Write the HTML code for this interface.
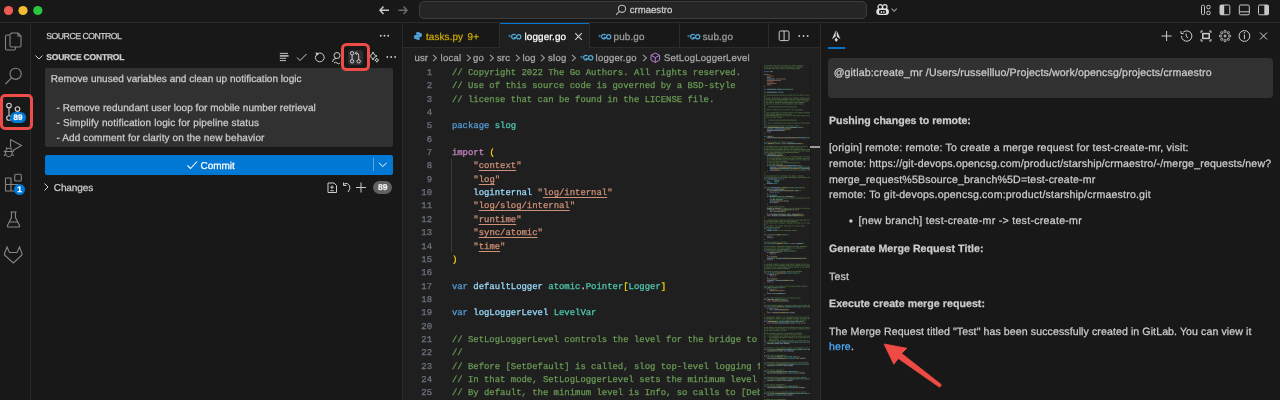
<!DOCTYPE html>
<html><head><meta charset="utf-8"><style>
html,body{margin:0;padding:0;width:1280px;height:400px;overflow:hidden;background:#181818;}
body{position:relative;font-family:'Liberation Sans', sans-serif;}
div{-webkit-text-stroke:0.25px currentColor;text-rendering:geometricPrecision;}
#root{position:absolute;left:0;top:0;width:1280px;height:400px;overflow:hidden;background:#181818;will-change:transform;}
</style></head><body><div id="root">
<div style="position:absolute;left:0px;top:0px;width:1280px;height:22px;background:#181818;"></div><div style="position:absolute;left:0px;top:22px;width:1280px;height:1px;background:#2b2b2b;"></div><svg style="position:absolute;left:0px;top:0px;" width="50" height="22" viewBox="0 0 50 22"><circle cx="8.5" cy="10.5" r="4.6" fill="#ee5b52"/><circle cx="23" cy="10.5" r="4.6" fill="#f4bd30"/><circle cx="37.8" cy="10.5" r="4.6" fill="#2ac63f"/></svg><svg style="position:absolute;left:376px;top:3px;" width="36" height="16" viewBox="0 0 36 16"><path d="M7.5 3.5 L4 7.3 L7.5 11.1 M4 7.3 H13" stroke="#c8c8c8" stroke-width="1.5" fill="none"/><path d="M27.5 3.5 L31 7.3 L27.5 11.1 M22.5 7.3 H31" stroke="#6a6a6a" stroke-width="1.5" fill="none"/></svg><div style="position:absolute;left:419px;top:1px;width:448px;height:18px;background:#252525;box-sizing:border-box;border:1.2px solid #3e3e3e;border-radius:5px;"></div><svg style="position:absolute;left:614px;top:3px;" width="14" height="14" viewBox="0 0 14 14"><circle cx="8" cy="5.8" r="3.6" stroke="#b8b8b8" stroke-width="1.1" fill="none"/><path d="M5.4 8.4 L2 11.8" stroke="#b8b8b8" stroke-width="1.1"/></svg><div style="position:absolute;left:629.7px;top:4.35px;height:13.44px;line-height:13.44px;font-size:9.6px;font-family:'Liberation Sans', sans-serif;font-weight:400;color:#cccccc;white-space:pre;">crmaestro</div><svg style="position:absolute;left:874px;top:2px;" width="26" height="16" viewBox="0 0 26 16"><rect x="2.3" y="6.6" width="12.6" height="6.4" rx="3.2" fill="#e2e2e2"/><rect x="5.1" y="8.1" width="7" height="3.7" rx="1.3" fill="#181818"/><ellipse cx="7.4" cy="9.9" rx="0.75" ry="1" fill="#e2e2e2"/><ellipse cx="9.9" cy="9.9" rx="0.75" ry="1" fill="#e2e2e2"/><circle cx="6.2" cy="4.9" r="2.25" stroke="#e2e2e2" stroke-width="1.2" fill="#181818"/><circle cx="10.8" cy="4.9" r="2.25" stroke="#e2e2e2" stroke-width="1.2" fill="#181818"/><path d="M17.6 6.6 L20.2 9.3 L22.8 6.6" stroke="#a0a0a0" stroke-width="1.1" fill="none"/></svg><svg style="position:absolute;left:1198px;top:2px;" width="78" height="18" viewBox="0 0 78 18">
<rect x="3.5" y="3.2" width="3" height="9.4" rx="1.2" stroke="#c8c8c8" stroke-width="1" fill="none"/>
<rect x="8.8" y="3.4" width="3.4" height="3.4" rx="1.3" stroke="#c8c8c8" stroke-width="1" fill="none"/>
<rect x="8.8" y="9.2" width="3.4" height="3.4" rx="1.3" stroke="#c8c8c8" stroke-width="1" fill="none"/>
<rect x="22" y="3" width="9.8" height="9.8" rx="1.3" stroke="#c8c8c8" stroke-width="1" fill="none"/>
<rect x="22" y="3" width="4.2" height="9.8" fill="#c8c8c8"/>
<rect x="41.3" y="3" width="10" height="9.8" rx="1.3" stroke="#c8c8c8" stroke-width="1" fill="none"/>
<path d="M41.3 9.8 H51.3" stroke="#c8c8c8" stroke-width="1"/>
<rect x="60.5" y="3" width="10" height="9.8" rx="1.3" stroke="#c8c8c8" stroke-width="1" fill="none"/>
<rect x="66.3" y="3" width="4.2" height="9.8" fill="#c8c8c8"/>
</svg><div style="position:absolute;left:0px;top:23px;width:30px;height:377px;background:#181818;"></div><div style="position:absolute;left:30px;top:23px;width:1px;height:377px;background:#2b2b2b;"></div><svg style="position:absolute;left:0px;top:24px;" width="30" height="260" viewBox="0 0 30 260">
<g stroke="#858585" stroke-width="1.1" fill="none">
<path d="M9.8 11 H7 Q5.5 11 5.5 12.5 V24.5 Q5.5 26 7 26 H14 Q15.5 26 15.5 24.5 V23"/>
<path d="M11.5 9.5 Q10 9.5 10 11 V21.5 Q10 23 11.5 23 H19.5 Q21 23 21 21.5 V12 L18 9 H11.5Z"/>
<path d="M18 9 V12 H21"/>
<circle cx="15.6" cy="49.8" r="5.6"/>
<path d="M11.6 53.8 L5.5 60"/>
</g>
</svg><svg style="position:absolute;left:0px;top:95px;" width="30" height="34" viewBox="0 0 30 34">
<g stroke="#cfcfcf" stroke-width="1.1" fill="none">
<circle cx="9" cy="10.5" r="2.3"/>
<circle cx="17.5" cy="14" r="2.3"/>
<circle cx="9" cy="23" r="2.3"/>
<path d="M9 12.8 V20.7"/>
<path d="M17.5 16.3 Q17.5 20 11.3 22"/>
</g>
</svg><div style="position:absolute;left:10px;top:112px;width:16px;height:11px;border-radius:6px;background:#0078d4;color:#fff;font-family:&quot;Liberation Sans&quot;,sans-serif;font-weight:700;font-size:8px;line-height:11px;text-align:center;">89</div><svg style="position:absolute;left:0px;top:135px;" width="30" height="140" viewBox="0 0 30 140">
<g stroke="#858585" stroke-width="1.1" fill="none">
<path d="M10.5 4.5 L21.5 10.5 L13 15.5"/>
<path d="M10.5 4.5 V12"/>
<ellipse cx="8.8" cy="17.5" rx="3.3" ry="4.2"/>
<path d="M5.5 16.5 H12 M5.5 17.2 L3.8 16 M12.2 17.2 L13.8 16 M5.5 19.5 L3.8 20.8 M12.2 19.5 L13.8 20.8 M7 13.5 L6 12.5 M10.6 13.5 L11.6 12.5"/>
<path d="M5.5 43 H11 V49.5 H17.5 V56 H5.5 Z M5.5 49.5 H11 V56" stroke-linejoin="round"/>
<rect x="14.7" y="39.2" width="6.6" height="6.8" rx="1.3"/>
<path d="M11.5 77 V82.5 L7.5 90.5 Q7 92 8.5 92 H18.5 Q20 92 19.5 90.5 L15.5 82.5 V77 M10.5 77 H16.5 M9.3 87 H17.8"/>
<path d="M4.5 118.5 L7 112 L9.5 117.5 H17 L19.5 112 L22 118.5 L22 120 L13.3 128 L4.5 120 Z"/>
</g>
</svg><div style="position:absolute;left:14px;top:183.5px;width:11px;height:11px;border-radius:6px;background:#0078d4;color:#fff;font-family:&quot;Liberation Sans&quot;,sans-serif;font-weight:700;font-size:8px;line-height:11px;text-align:center;">1</div><div style="position:absolute;left:31px;top:23px;width:371px;height:377px;background:#181818;"></div><div style="position:absolute;left:402px;top:23px;width:1px;height:377px;background:#2b2b2b;"></div><div style="position:absolute;left:46.3px;top:30.09px;height:12.18px;line-height:12.18px;font-size:8.7px;font-family:'Liberation Sans', sans-serif;font-weight:400;color:#cccccc;white-space:pre;letter-spacing:-0.5px;">SOURCE CONTROL</div><svg style="position:absolute;left:376px;top:29px;" width="20" height="12" viewBox="0 0 20 12"><circle cx="4.8" cy="6.8" r="0.95" fill="#cccccc"/><circle cx="8.5" cy="6.8" r="0.95" fill="#cccccc"/><circle cx="12.2" cy="6.8" r="0.95" fill="#cccccc"/></svg><svg style="position:absolute;left:33px;top:51px;" width="12" height="12" viewBox="0 0 12 12"><path d="M2.5 4.5 L6 8 L9.5 4.5" stroke="#cccccc" stroke-width="1" fill="none"/></svg><div style="position:absolute;left:46.3px;top:51.60px;height:11.9px;line-height:11.9px;font-size:8.5px;font-family:'Liberation Sans', sans-serif;font-weight:700;color:#cccccc;white-space:pre;letter-spacing:-0.2px;">SOURCE CONTROL</div><svg style="position:absolute;left:276px;top:46px;" width="124" height="22" viewBox="0 0 124 22">
<g stroke="#cccccc" stroke-width="1" fill="none">
<path d="M3.8 7.4 H12 M3.8 12.3 H10.2 M3.8 14.6 H10" stroke-width="0.95"/><path d="M3.8 9.9 H12.6" stroke-width="1.5"/>
<path d="M21 11.5 L24 14.5 L30.5 8"/>
<path d="M41.6 7.6 A4.4 4.4 0 1 1 39.8 9.6"/><path d="M39.6 6.2 L43.2 7.6 L40.4 10.2 Z" fill="#cccccc" stroke="none"/>
<circle cx="61" cy="9.5" r="3"/>
<path d="M56.5 16 Q56.5 12.5 60 12.5 M58 17 Q59.5 15.5 61 17 Q62.5 18.5 64 17"/>
</g>
</svg><div style="position:absolute;left:348px;top:49.5px;width:15px;height:15px;background:#2e2e2e;border-radius:3px;"></div><svg style="position:absolute;left:346px;top:48px;" width="20" height="18" viewBox="0 0 20 18">
<g stroke="#d0d0d0" stroke-width="1" fill="none">
<circle cx="6.1" cy="5.3" r="1.7"/><circle cx="6.1" cy="13.3" r="1.7"/><circle cx="12.7" cy="13.3" r="1.7"/>
<path d="M6.1 7 V11.6"/>
<path d="M12.7 11.6 V7.3 Q12.7 5.2 10.6 5.2 H9.4 M10.9 3.6 L9.3 5.2 L10.9 6.8"/>
</g>
</svg><svg style="position:absolute;left:366px;top:48px;" width="34" height="18" viewBox="0 0 34 18">
<g stroke="#cccccc" stroke-width="1" fill="none">
<path d="M7 4 Q7.6 7.4 11 8 Q7.6 8.6 7 12 Q6.4 8.6 3 8 Q6.4 7.4 7 4 Z"/>
<path d="M10.8 10.2 Q11.1 11.9 12.8 12.2 Q11.1 12.5 10.8 14.2 Q10.5 12.5 8.8 12.2 Q10.5 11.9 10.8 10.2 Z"/>
</g>
<circle cx="21.3" cy="9" r="0.9" fill="#cccccc"/><circle cx="25.2" cy="9" r="0.9" fill="#cccccc"/><circle cx="29.1" cy="9" r="0.9" fill="#cccccc"/>
</svg><div style="position:absolute;left:45px;top:68px;width:348px;height:79px;background:#313131;border-radius:2px;"></div><div style="position:absolute;left:50.8px;top:72.73px;height:14.0px;line-height:14.0px;font-size:10px;font-family:'Liberation Sans', sans-serif;font-weight:400;color:#cccccc;white-space:pre;letter-spacing:0.02px;">Remove unused variables and clean up notification logic</div><div style="position:absolute;left:50.8px;top:102.23px;height:14.0px;line-height:14.0px;font-size:10px;font-family:'Liberation Sans', sans-serif;font-weight:400;color:#cccccc;white-space:pre;letter-spacing:0.045px;">  - Remove redundant user loop for mobile number retrieval</div><div style="position:absolute;left:50.8px;top:117.13px;height:14.0px;line-height:14.0px;font-size:10px;font-family:'Liberation Sans', sans-serif;font-weight:400;color:#cccccc;white-space:pre;letter-spacing:0.127px;">  - Simplify notification logic for pipeline status</div><div style="position:absolute;left:50.8px;top:131.93px;height:14.0px;line-height:14.0px;font-size:10px;font-family:'Liberation Sans', sans-serif;font-weight:400;color:#cccccc;white-space:pre;letter-spacing:0.1px;">  - Add comment for clarity on the new behavior</div><div style="position:absolute;left:341px;top:43px;width:29px;height:28px;box-sizing:border-box;border:3.7px solid #ee4c48;border-radius:5.5px;"></div><div style="position:absolute;left:45px;top:154.5px;width:347.5px;height:20.3px;background:#0078d4;border-radius:2px;"></div><svg style="position:absolute;left:185px;top:158px;" width="14" height="14" viewBox="0 0 14 14"><path d="M2.5 7.5 L5.5 10.5 L12 3.5" stroke="#ffffff" stroke-width="1.1" fill="none"/></svg><div style="position:absolute;left:200.6px;top:159.73px;height:14.0px;line-height:14.0px;font-size:10px;font-family:'Liberation Sans', sans-serif;font-weight:400;color:#ffffff;white-space:pre;letter-spacing:-0.05px;">Commit</div><div style="position:absolute;left:373.2px;top:158px;width:1px;height:13px;background:rgba(255,255,255,0.35);"></div><svg style="position:absolute;left:376px;top:160px;" width="14" height="10" viewBox="0 0 14 10"><path d="M3 2.8 L6.8 6.6 L10.6 2.8" stroke="#ffffff" stroke-width="1" fill="none"/></svg><svg style="position:absolute;left:40px;top:181px;" width="12" height="12" viewBox="0 0 12 12"><path d="M4.5 2.5 L8 6 L4.5 9.5" stroke="#cccccc" stroke-width="1" fill="none"/></svg><div style="position:absolute;left:53.75px;top:182.33px;height:14.0px;line-height:14.0px;font-size:10px;font-family:'Liberation Sans', sans-serif;font-weight:400;color:#cccccc;white-space:pre;letter-spacing:-0.08px;">Changes</div><svg style="position:absolute;left:324px;top:179px;" width="46" height="16" viewBox="0 0 46 16">
<g stroke="#cccccc" stroke-width="1" fill="none">
<path d="M4 4 H10 L12.5 6.5 V13.5 H4 Z"/>
<path d="M8 6.5 V10 M6.3 8.2 H9.7 M6.3 11.7 H9.7"/>
<path d="M20 5 Q23.5 3 25.5 6.5 Q27 9.5 24 13" />
<path d="M19.5 3.5 V6.5 H22.5"/>
<path d="M37 3.5 V13.5 M32 8.5 H42"/>
</g>
</svg><div style="position:absolute;left:372.8px;top:180.7px;width:19.7px;height:13.5px;border-radius:7px;background:#616161;color:#f0f0f0;font-family:&quot;Liberation Sans&quot;,sans-serif;font-weight:700;font-size:8.5px;line-height:13.5px;text-align:center;">89</div><div style="position:absolute;left:403px;top:23px;width:417px;height:377px;background:#1f1f1f;"></div><div style="position:absolute;left:403px;top:23px;width:417px;height:25px;background:#181818;"></div><div style="position:absolute;left:403px;top:47px;width:417px;height:1px;background:#2b2b2b;"></div><div style="position:absolute;left:500px;top:23px;width:89.4px;height:25px;background:#1f1f1f;"></div><div style="position:absolute;left:500px;top:23px;width:89.4px;height:1px;background:#0078d4;"></div><div style="position:absolute;left:499px;top:23px;width:1px;height:25px;background:#2b2b2b;"></div><div style="position:absolute;left:589.4px;top:23px;width:1px;height:24px;background:#2b2b2b;"></div><div style="position:absolute;left:678.6px;top:23px;width:1px;height:24px;background:#2b2b2b;"></div><div style="position:absolute;left:767.5px;top:23px;width:1px;height:24px;background:#2b2b2b;"></div><svg style="position:absolute;left:412px;top:30px;" width="12" height="12" viewBox="0 0 12 12"><g transform="translate(1.3,1.3) scale(0.78)"><path d="M5.8 1 C3.5 1 3.6 2 3.6 3.2 V4.3 H6 V4.8 H2.6 C1.2 4.8 0.8 5.9 0.8 7.3 C0.8 8.8 1.3 9.8 2.6 9.8 H3.5 V8.4 C3.5 7.4 4.3 6.6 5.3 6.6 H7.6 C8.4 6.6 9 6 9 5.2 V3 C9 1.9 8 1 5.8 1Z" fill="#4f9fd6"/><path d="M6.2 11 C8.5 11 8.4 10 8.4 8.8 V7.7 H6 V7.2 H9.4 C10.8 7.2 11.2 6.1 11.2 4.7 C11.2 3.2 10.7 2.2 9.4 2.2 H8.5 V3.6 C8.5 4.6 7.7 5.4 6.7 5.4 H4.4 C3.6 5.4 3 6 3 6.8 V9 C3 10.1 4 11 6.2 11Z" fill="#4f9fd6"/></g></svg><div style="position:absolute;left:426px;top:30.84px;height:13.86px;line-height:13.86px;font-size:9.9px;font-family:'Liberation Sans', sans-serif;font-weight:400;color:#cca700;white-space:pre;letter-spacing:0.12px;">tasks.py</div><div style="position:absolute;left:467.5px;top:30.84px;height:13.86px;line-height:13.86px;font-size:9.9px;font-family:'Liberation Sans', sans-serif;font-weight:400;color:#cca700;white-space:pre;letter-spacing:0.15px;">9+</div><svg style="position:absolute;left:508.3px;top:32.5px;" width="15" height="8" viewBox="0 0 15 8"><path d="M0.3 2.6 H2.6 M0.8 3.7 H2.6" stroke="#4fa8d8" stroke-width="0.7"/><path d="M7.6 2.2 A2.2 2.3 0 1 0 7.8 4.6 H5.8" stroke="#4fa8d8" stroke-width="1.25" fill="none"/><ellipse cx="10.7" cy="3.7" rx="2.1" ry="2.2" stroke="#4fa8d8" stroke-width="1.25" fill="none"/></svg><div style="position:absolute;left:524.5px;top:30.84px;height:13.86px;line-height:13.86px;font-size:9.9px;font-family:'Liberation Sans', sans-serif;font-weight:400;color:#ffffff;white-space:pre;letter-spacing:0.12px;">logger.go</div><svg style="position:absolute;left:573px;top:31px;" width="11" height="11" viewBox="0 0 11 11"><path d="M2.2 2.2 L8.8 8.8 M8.8 2.2 L2.2 8.8" stroke="#d0d0d0" stroke-width="1.1"/></svg><svg style="position:absolute;left:597.6px;top:32.5px;" width="15" height="8" viewBox="0 0 15 8"><path d="M0.3 2.6 H2.6 M0.8 3.7 H2.6" stroke="#4fa8d8" stroke-width="0.7"/><path d="M7.6 2.2 A2.2 2.3 0 1 0 7.8 4.6 H5.8" stroke="#4fa8d8" stroke-width="1.25" fill="none"/><ellipse cx="10.7" cy="3.7" rx="2.1" ry="2.2" stroke="#4fa8d8" stroke-width="1.25" fill="none"/></svg><div style="position:absolute;left:613.6px;top:30.84px;height:13.86px;line-height:13.86px;font-size:9.9px;font-family:'Liberation Sans', sans-serif;font-weight:400;color:#9d9d9d;white-space:pre;letter-spacing:0.13px;">pub.go</div><svg style="position:absolute;left:687px;top:32.5px;" width="15" height="8" viewBox="0 0 15 8"><path d="M0.3 2.6 H2.6 M0.8 3.7 H2.6" stroke="#4fa8d8" stroke-width="0.7"/><path d="M7.6 2.2 A2.2 2.3 0 1 0 7.8 4.6 H5.8" stroke="#4fa8d8" stroke-width="1.25" fill="none"/><ellipse cx="10.7" cy="3.7" rx="2.1" ry="2.2" stroke="#4fa8d8" stroke-width="1.25" fill="none"/></svg><div style="position:absolute;left:702.7px;top:30.84px;height:13.86px;line-height:13.86px;font-size:9.9px;font-family:'Liberation Sans', sans-serif;font-weight:400;color:#9d9d9d;white-space:pre;letter-spacing:0.13px;">sub.go</div><svg style="position:absolute;left:776px;top:28px;" width="40" height="16" viewBox="0 0 40 16"><rect x="3.2" y="3" width="9.8" height="9.6" rx="1.3" stroke="#cccccc" stroke-width="1" fill="none"/><path d="M8.1 3 V12.6" stroke="#cccccc" stroke-width="1"/><circle cx="23.3" cy="8" r="0.9" fill="#cccccc"/><circle cx="27.5" cy="8" r="0.9" fill="#cccccc"/><circle cx="31.7" cy="8" r="0.9" fill="#cccccc"/></svg><div style="position:absolute;left:414.4px;top:52.46px;height:13.3px;line-height:13.3px;font-size:9.5px;font-family:'Liberation Sans', sans-serif;font-weight:400;color:#a9a9a9;white-space:pre;letter-spacing:0.22px;">usr</div><div style="position:absolute;left:440.6px;top:52.46px;height:13.3px;line-height:13.3px;font-size:9.5px;font-family:'Liberation Sans', sans-serif;font-weight:400;color:#a9a9a9;white-space:pre;letter-spacing:0.22px;">local</div><div style="position:absolute;left:473.1px;top:52.46px;height:13.3px;line-height:13.3px;font-size:9.5px;font-family:'Liberation Sans', sans-serif;font-weight:400;color:#a9a9a9;white-space:pre;letter-spacing:0.22px;">go</div><div style="position:absolute;left:496.9px;top:52.46px;height:13.3px;line-height:13.3px;font-size:9.5px;font-family:'Liberation Sans', sans-serif;font-weight:400;color:#a9a9a9;white-space:pre;letter-spacing:0.22px;">src</div><div style="position:absolute;left:522.5px;top:52.46px;height:13.3px;line-height:13.3px;font-size:9.5px;font-family:'Liberation Sans', sans-serif;font-weight:400;color:#a9a9a9;white-space:pre;letter-spacing:0.22px;">log</div><div style="position:absolute;left:548.1px;top:52.46px;height:13.3px;line-height:13.3px;font-size:9.5px;font-family:'Liberation Sans', sans-serif;font-weight:400;color:#a9a9a9;white-space:pre;letter-spacing:0.22px;">slog</div><svg style="position:absolute;left:432.3px;top:54px;" width="6" height="8" viewBox="0 0 6 8"><path d="M1 0.9 L4.4 4 L1 7.1" stroke="#9a9a9a" stroke-width="1.1" fill="none"/></svg><svg style="position:absolute;left:465.6px;top:54px;" width="6" height="8" viewBox="0 0 6 8"><path d="M1 0.9 L4.4 4 L1 7.1" stroke="#9a9a9a" stroke-width="1.1" fill="none"/></svg><svg style="position:absolute;left:489px;top:54px;" width="6" height="8" viewBox="0 0 6 8"><path d="M1 0.9 L4.4 4 L1 7.1" stroke="#9a9a9a" stroke-width="1.1" fill="none"/></svg><svg style="position:absolute;left:514.6px;top:54px;" width="6" height="8" viewBox="0 0 6 8"><path d="M1 0.9 L4.4 4 L1 7.1" stroke="#9a9a9a" stroke-width="1.1" fill="none"/></svg><svg style="position:absolute;left:540px;top:54px;" width="6" height="8" viewBox="0 0 6 8"><path d="M1 0.9 L4.4 4 L1 7.1" stroke="#9a9a9a" stroke-width="1.1" fill="none"/></svg><svg style="position:absolute;left:571.3px;top:54px;" width="6" height="8" viewBox="0 0 6 8"><path d="M1 0.9 L4.4 4 L1 7.1" stroke="#9a9a9a" stroke-width="1.1" fill="none"/></svg><svg style="position:absolute;left:642px;top:54px;" width="6" height="8" viewBox="0 0 6 8"><path d="M1 0.9 L4.4 4 L1 7.1" stroke="#9a9a9a" stroke-width="1.1" fill="none"/></svg><svg style="position:absolute;left:579.7px;top:54px;" width="15" height="8" viewBox="0 0 15 8"><path d="M0.3 2.6 H2.6 M0.8 3.7 H2.6" stroke="#4fa8d8" stroke-width="0.7"/><path d="M7.6 2.2 A2.2 2.3 0 1 0 7.8 4.6 H5.8" stroke="#4fa8d8" stroke-width="1.25" fill="none"/><ellipse cx="10.7" cy="3.7" rx="2.1" ry="2.2" stroke="#4fa8d8" stroke-width="1.25" fill="none"/></svg><div style="position:absolute;left:595.6px;top:52.46px;height:13.3px;line-height:13.3px;font-size:9.5px;font-family:'Liberation Sans', sans-serif;font-weight:400;color:#a9a9a9;white-space:pre;letter-spacing:0.229px;">logger.go</div><svg style="position:absolute;left:650px;top:51.5px;" width="11" height="11" viewBox="0 0 11 11"><g stroke="#b180d7" stroke-width="1" fill="none"><path d="M5.3 1 L9.6 3.3 V8.1 L5.3 10.4 L1 8.1 V3.3 Z"/><path d="M1 3.3 L5.3 5.6 L9.6 3.3 M5.3 5.6 V10.4"/></g></svg><div style="position:absolute;left:664px;top:52.46px;height:13.3px;line-height:13.3px;font-size:9.5px;font-family:'Liberation Sans', sans-serif;font-weight:400;color:#a9a9a9;white-space:pre;letter-spacing:0.2px;">SetLogLoggerLevel</div><div style="position:absolute;left:400px;top:66.84px;width:32px;height:13.36px;line-height:13.36px;text-align:right;font-family:'Liberation Mono', monospace;font-size:8.94px;color:#6e7681;">1</div><div style="position:absolute;left:400px;top:80.20px;width:32px;height:13.36px;line-height:13.36px;text-align:right;font-family:'Liberation Mono', monospace;font-size:8.94px;color:#6e7681;">2</div><div style="position:absolute;left:400px;top:93.56px;width:32px;height:13.36px;line-height:13.36px;text-align:right;font-family:'Liberation Mono', monospace;font-size:8.94px;color:#6e7681;">3</div><div style="position:absolute;left:400px;top:106.92px;width:32px;height:13.36px;line-height:13.36px;text-align:right;font-family:'Liberation Mono', monospace;font-size:8.94px;color:#6e7681;">4</div><div style="position:absolute;left:400px;top:120.28px;width:32px;height:13.36px;line-height:13.36px;text-align:right;font-family:'Liberation Mono', monospace;font-size:8.94px;color:#6e7681;">5</div><div style="position:absolute;left:400px;top:133.64px;width:32px;height:13.36px;line-height:13.36px;text-align:right;font-family:'Liberation Mono', monospace;font-size:8.94px;color:#6e7681;">6</div><div style="position:absolute;left:400px;top:147.00px;width:32px;height:13.36px;line-height:13.36px;text-align:right;font-family:'Liberation Mono', monospace;font-size:8.94px;color:#6e7681;">7</div><div style="position:absolute;left:400px;top:160.36px;width:32px;height:13.36px;line-height:13.36px;text-align:right;font-family:'Liberation Mono', monospace;font-size:8.94px;color:#6e7681;">8</div><div style="position:absolute;left:400px;top:173.72px;width:32px;height:13.36px;line-height:13.36px;text-align:right;font-family:'Liberation Mono', monospace;font-size:8.94px;color:#6e7681;">9</div><div style="position:absolute;left:400px;top:187.08px;width:32px;height:13.36px;line-height:13.36px;text-align:right;font-family:'Liberation Mono', monospace;font-size:8.94px;color:#6e7681;">10</div><div style="position:absolute;left:400px;top:200.44px;width:32px;height:13.36px;line-height:13.36px;text-align:right;font-family:'Liberation Mono', monospace;font-size:8.94px;color:#6e7681;">11</div><div style="position:absolute;left:400px;top:213.80px;width:32px;height:13.36px;line-height:13.36px;text-align:right;font-family:'Liberation Mono', monospace;font-size:8.94px;color:#6e7681;">12</div><div style="position:absolute;left:400px;top:227.16px;width:32px;height:13.36px;line-height:13.36px;text-align:right;font-family:'Liberation Mono', monospace;font-size:8.94px;color:#6e7681;">13</div><div style="position:absolute;left:400px;top:240.52px;width:32px;height:13.36px;line-height:13.36px;text-align:right;font-family:'Liberation Mono', monospace;font-size:8.94px;color:#6e7681;">14</div><div style="position:absolute;left:400px;top:253.88px;width:32px;height:13.36px;line-height:13.36px;text-align:right;font-family:'Liberation Mono', monospace;font-size:8.94px;color:#6e7681;">15</div><div style="position:absolute;left:400px;top:267.24px;width:32px;height:13.36px;line-height:13.36px;text-align:right;font-family:'Liberation Mono', monospace;font-size:8.94px;color:#6e7681;">16</div><div style="position:absolute;left:400px;top:280.60px;width:32px;height:13.36px;line-height:13.36px;text-align:right;font-family:'Liberation Mono', monospace;font-size:8.94px;color:#6e7681;">17</div><div style="position:absolute;left:400px;top:293.96px;width:32px;height:13.36px;line-height:13.36px;text-align:right;font-family:'Liberation Mono', monospace;font-size:8.94px;color:#6e7681;">18</div><div style="position:absolute;left:400px;top:307.32px;width:32px;height:13.36px;line-height:13.36px;text-align:right;font-family:'Liberation Mono', monospace;font-size:8.94px;color:#6e7681;">19</div><div style="position:absolute;left:400px;top:320.68px;width:32px;height:13.36px;line-height:13.36px;text-align:right;font-family:'Liberation Mono', monospace;font-size:8.94px;color:#6e7681;">20</div><div style="position:absolute;left:400px;top:334.04px;width:32px;height:13.36px;line-height:13.36px;text-align:right;font-family:'Liberation Mono', monospace;font-size:8.94px;color:#6e7681;">21</div><div style="position:absolute;left:400px;top:347.40px;width:32px;height:13.36px;line-height:13.36px;text-align:right;font-family:'Liberation Mono', monospace;font-size:8.94px;color:#6e7681;">22</div><div style="position:absolute;left:400px;top:360.76px;width:32px;height:13.36px;line-height:13.36px;text-align:right;font-family:'Liberation Mono', monospace;font-size:8.94px;color:#6e7681;">23</div><div style="position:absolute;left:400px;top:374.12px;width:32px;height:13.36px;line-height:13.36px;text-align:right;font-family:'Liberation Mono', monospace;font-size:8.94px;color:#6e7681;">24</div><div style="position:absolute;left:400px;top:387.48px;width:32px;height:13.36px;line-height:13.36px;text-align:right;font-family:'Liberation Mono', monospace;font-size:8.94px;color:#6e7681;">25</div><div style="position:absolute;left:451.9px;top:0;width:309.1px;height:400px;overflow:hidden;font-family:'Liberation Mono', monospace;font-size:8.94px;color:#d4d4d4;"><div style="position:absolute;left:0;top:66.84px;height:13.36px;line-height:13.36px;white-space:pre;"><span style="color:#6a9955;">// Copyright 2022 The Go Authors. All rights reserved.</span></div><div style="position:absolute;left:0;top:80.20px;height:13.36px;line-height:13.36px;white-space:pre;"><span style="color:#6a9955;">// Use of this source code is governed by a BSD-style</span></div><div style="position:absolute;left:0;top:93.56px;height:13.36px;line-height:13.36px;white-space:pre;"><span style="color:#6a9955;">// license that can be found in the LICENSE file.</span></div><div style="position:absolute;left:0;top:106.92px;height:13.36px;line-height:13.36px;white-space:pre;"></div><div style="position:absolute;left:0;top:120.28px;height:13.36px;line-height:13.36px;white-space:pre;"><span style="color:#569cd6;">package</span> <span style="color:#4ec9b0;">slog</span></div><div style="position:absolute;left:0;top:133.64px;height:13.36px;line-height:13.36px;white-space:pre;"></div><div style="position:absolute;left:0;top:147.00px;height:13.36px;line-height:13.36px;white-space:pre;"><span style="color:#c586c0;">import</span> <span style="color:#ffd700;">(</span></div><div style="position:absolute;left:0;top:160.36px;height:13.36px;line-height:13.36px;white-space:pre;">    <span style="color:#ce9178;">"</span><span style="color:#ce9178;text-decoration:underline;text-underline-offset:1.5px;text-decoration-thickness:1px;">context</span><span style="color:#ce9178;">"</span></div><div style="position:absolute;left:0;top:173.72px;height:13.36px;line-height:13.36px;white-space:pre;">    <span style="color:#ce9178;">"</span><span style="color:#ce9178;text-decoration:underline;text-underline-offset:1.5px;text-decoration-thickness:1px;">log</span><span style="color:#ce9178;">"</span></div><div style="position:absolute;left:0;top:187.08px;height:13.36px;line-height:13.36px;white-space:pre;">    <span style="color:#9cdcfe;">loginternal</span> <span style="color:#ce9178;">"</span><span style="color:#ce9178;text-decoration:underline;text-underline-offset:1.5px;text-decoration-thickness:1px;">log/internal</span><span style="color:#ce9178;">"</span></div><div style="position:absolute;left:0;top:200.44px;height:13.36px;line-height:13.36px;white-space:pre;">    <span style="color:#ce9178;">"</span><span style="color:#ce9178;text-decoration:underline;text-underline-offset:1.5px;text-decoration-thickness:1px;">log/slog/internal</span><span style="color:#ce9178;">"</span></div><div style="position:absolute;left:0;top:213.80px;height:13.36px;line-height:13.36px;white-space:pre;">    <span style="color:#ce9178;">"</span><span style="color:#ce9178;text-decoration:underline;text-underline-offset:1.5px;text-decoration-thickness:1px;">runtime</span><span style="color:#ce9178;">"</span></div><div style="position:absolute;left:0;top:227.16px;height:13.36px;line-height:13.36px;white-space:pre;">    <span style="color:#ce9178;">"</span><span style="color:#ce9178;text-decoration:underline;text-underline-offset:1.5px;text-decoration-thickness:1px;">sync/atomic</span><span style="color:#ce9178;">"</span></div><div style="position:absolute;left:0;top:240.52px;height:13.36px;line-height:13.36px;white-space:pre;">    <span style="color:#ce9178;">"</span><span style="color:#ce9178;text-decoration:underline;text-underline-offset:1.5px;text-decoration-thickness:1px;">time</span><span style="color:#ce9178;">"</span></div><div style="position:absolute;left:0;top:253.88px;height:13.36px;line-height:13.36px;white-space:pre;"><span style="color:#ffd700;">)</span></div><div style="position:absolute;left:0;top:267.24px;height:13.36px;line-height:13.36px;white-space:pre;"></div><div style="position:absolute;left:0;top:280.60px;height:13.36px;line-height:13.36px;white-space:pre;"><span style="color:#569cd6;">var</span> <span style="color:#9cdcfe;">defaultLogger</span> <span style="color:#4ec9b0;">atomic</span><span style="color:#d4d4d4;">.</span><span style="color:#4ec9b0;">Pointer</span><span style="color:#ffd700;">[</span><span style="color:#4ec9b0;">Logger</span><span style="color:#ffd700;">]</span></div><div style="position:absolute;left:0;top:293.96px;height:13.36px;line-height:13.36px;white-space:pre;"></div><div style="position:absolute;left:0;top:307.32px;height:13.36px;line-height:13.36px;white-space:pre;"><span style="color:#569cd6;">var</span> <span style="color:#9cdcfe;">logLoggerLevel</span> <span style="color:#4ec9b0;">LevelVar</span></div><div style="position:absolute;left:0;top:320.68px;height:13.36px;line-height:13.36px;white-space:pre;"></div><div style="position:absolute;left:0;top:334.04px;height:13.36px;line-height:13.36px;white-space:pre;"><span style="color:#6a9955;">// SetLogLoggerLevel controls the level for the bridge to the [log] package.</span></div><div style="position:absolute;left:0;top:347.40px;height:13.36px;line-height:13.36px;white-space:pre;"><span style="color:#6a9955;">//</span></div><div style="position:absolute;left:0;top:360.76px;height:13.36px;line-height:13.36px;white-space:pre;"><span style="color:#6a9955;">// Before [SetDefault] is called, slog top-level logging functions call the default [log.Logger].</span></div><div style="position:absolute;left:0;top:374.12px;height:13.36px;line-height:13.36px;white-space:pre;"><span style="color:#6a9955;">// In that mode, SetLogLoggerLevel sets the minimum level for those calls.</span></div><div style="position:absolute;left:0;top:387.48px;height:13.36px;line-height:13.36px;white-space:pre;"><span style="color:#6a9955;">// By default, the minimum level is Info, so calls to [Debug]</span></div></div><div style="position:absolute;left:451.2px;top:158.9px;width:1.2px;height:93.4px;background:#3c3c3c;"></div><div style="position:absolute;left:761px;top:48px;width:59px;height:352px;background:#1f1f1f;"></div><div style="position:absolute;left:760.3px;top:65px;width:1.2px;height:335px;background:#171717;"></div><div style="position:absolute;left:810px;top:65px;width:1px;height:335px;background:#1a1a1a;"></div><svg style="position:absolute;left:763.5px;top:0px;" width="47" height="400" viewBox="0 0 47 400"><g opacity="0.5"><rect x="0.00" y="65.30" width="1.46" height="0.91" fill="#6a9955"/><rect x="2.19" y="65.30" width="6.57" height="0.91" fill="#6a9955"/><rect x="9.49" y="65.30" width="2.92" height="0.91" fill="#6a9955"/><rect x="13.14" y="65.30" width="2.19" height="0.91" fill="#6a9955"/><rect x="16.06" y="65.30" width="1.46" height="0.91" fill="#6a9955"/><rect x="18.25" y="65.30" width="5.84" height="0.91" fill="#6a9955"/><rect x="24.82" y="65.30" width="2.19" height="0.91" fill="#6a9955"/><rect x="27.74" y="65.30" width="4.38" height="0.91" fill="#6a9955"/><rect x="32.85" y="65.30" width="6.57" height="0.91" fill="#6a9955"/><rect x="0.00" y="66.77" width="1.46" height="0.91" fill="#6a9955"/><rect x="2.19" y="66.77" width="2.19" height="0.91" fill="#6a9955"/><rect x="5.11" y="66.77" width="1.46" height="0.91" fill="#6a9955"/><rect x="7.30" y="66.77" width="2.92" height="0.91" fill="#6a9955"/><rect x="10.95" y="66.77" width="4.38" height="0.91" fill="#6a9955"/><rect x="16.06" y="66.77" width="2.92" height="0.91" fill="#6a9955"/><rect x="19.71" y="66.77" width="1.46" height="0.91" fill="#6a9955"/><rect x="21.90" y="66.77" width="5.84" height="0.91" fill="#6a9955"/><rect x="28.47" y="66.77" width="1.46" height="0.91" fill="#6a9955"/><rect x="30.66" y="66.77" width="0.73" height="0.91" fill="#6a9955"/><rect x="32.12" y="66.77" width="6.57" height="0.91" fill="#6a9955"/><rect x="0.00" y="68.24" width="1.46" height="0.91" fill="#6a9955"/><rect x="2.19" y="68.24" width="5.11" height="0.91" fill="#6a9955"/><rect x="8.03" y="68.24" width="2.92" height="0.91" fill="#6a9955"/><rect x="11.68" y="68.24" width="2.19" height="0.91" fill="#6a9955"/><rect x="14.60" y="68.24" width="1.46" height="0.91" fill="#6a9955"/><rect x="16.79" y="68.24" width="3.65" height="0.91" fill="#6a9955"/><rect x="21.17" y="68.24" width="1.46" height="0.91" fill="#6a9955"/><rect x="23.36" y="68.24" width="2.19" height="0.91" fill="#6a9955"/><rect x="26.28" y="68.24" width="5.11" height="0.91" fill="#6a9955"/><rect x="32.12" y="68.24" width="3.65" height="0.91" fill="#6a9955"/><rect x="0.00" y="71.18" width="5.11" height="0.91" fill="#569cd6"/><rect x="5.84" y="71.18" width="2.92" height="0.91" fill="#9cdcfe"/><rect x="0.00" y="74.12" width="4.38" height="0.91" fill="#c586c0"/><rect x="5.11" y="74.12" width="0.73" height="0.91" fill="#ffd700"/><rect x="2.92" y="75.59" width="6.57" height="0.91" fill="#ce9178"/><rect x="2.92" y="77.06" width="3.65" height="0.91" fill="#ce9178"/><rect x="2.92" y="78.53" width="8.03" height="0.91" fill="#9cdcfe"/><rect x="11.68" y="78.53" width="10.22" height="0.91" fill="#ce9178"/><rect x="2.92" y="80.00" width="13.87" height="0.91" fill="#ce9178"/><rect x="2.92" y="81.47" width="6.57" height="0.91" fill="#ce9178"/><rect x="2.92" y="82.94" width="9.49" height="0.91" fill="#ce9178"/><rect x="2.92" y="84.41" width="4.38" height="0.91" fill="#ce9178"/><rect x="0.00" y="85.88" width="0.73" height="0.91" fill="#ffd700"/><rect x="0.00" y="88.82" width="2.19" height="0.91" fill="#569cd6"/><rect x="2.92" y="88.82" width="9.49" height="0.91" fill="#9cdcfe"/><rect x="13.14" y="88.82" width="4.38" height="0.91" fill="#9cdcfe"/><rect x="17.52" y="88.82" width="0.73" height="0.91" fill="#d4d4d4"/><rect x="18.25" y="88.82" width="5.11" height="0.91" fill="#4ec9b0"/><rect x="23.36" y="88.82" width="0.73" height="0.91" fill="#ffd700"/><rect x="24.09" y="88.82" width="4.38" height="0.91" fill="#4ec9b0"/><rect x="28.47" y="88.82" width="0.73" height="0.91" fill="#ffd700"/><rect x="0.00" y="91.76" width="2.19" height="0.91" fill="#569cd6"/><rect x="2.92" y="91.76" width="10.22" height="0.91" fill="#9cdcfe"/><rect x="13.87" y="91.76" width="5.84" height="0.91" fill="#4ec9b0"/><rect x="0.00" y="94.70" width="1.46" height="0.91" fill="#6a9955"/><rect x="2.19" y="94.70" width="12.41" height="0.91" fill="#6a9955"/><rect x="15.33" y="94.70" width="5.84" height="0.91" fill="#6a9955"/><rect x="21.90" y="94.70" width="2.19" height="0.91" fill="#6a9955"/><rect x="24.82" y="94.70" width="3.65" height="0.91" fill="#6a9955"/><rect x="29.20" y="94.70" width="2.19" height="0.91" fill="#6a9955"/><rect x="32.12" y="94.70" width="2.19" height="0.91" fill="#6a9955"/><rect x="35.04" y="94.70" width="4.38" height="0.91" fill="#6a9955"/><rect x="40.15" y="94.70" width="1.46" height="0.91" fill="#6a9955"/><rect x="42.34" y="94.70" width="2.19" height="0.91" fill="#6a9955"/><rect x="45.26" y="94.70" width="1.24" height="0.91" fill="#6a9955"/><rect x="0.00" y="96.17" width="1.46" height="0.91" fill="#6a9955"/><rect x="0.00" y="97.64" width="1.46" height="0.91" fill="#6a9955"/><rect x="2.19" y="97.64" width="4.38" height="0.91" fill="#6a9955"/><rect x="7.30" y="97.64" width="8.76" height="0.91" fill="#6a9955"/><rect x="16.79" y="97.64" width="1.46" height="0.91" fill="#6a9955"/><rect x="18.98" y="97.64" width="5.11" height="0.91" fill="#6a9955"/><rect x="24.82" y="97.64" width="2.92" height="0.91" fill="#6a9955"/><rect x="28.47" y="97.64" width="6.57" height="0.91" fill="#6a9955"/><rect x="35.77" y="97.64" width="5.11" height="0.91" fill="#6a9955"/><rect x="41.61" y="97.64" width="4.89" height="0.91" fill="#6a9955"/><rect x="0.00" y="99.11" width="1.46" height="0.91" fill="#6a9955"/><rect x="2.19" y="99.11" width="1.46" height="0.91" fill="#6a9955"/><rect x="4.38" y="99.11" width="2.92" height="0.91" fill="#6a9955"/><rect x="8.03" y="99.11" width="3.65" height="0.91" fill="#6a9955"/><rect x="12.41" y="99.11" width="12.41" height="0.91" fill="#6a9955"/><rect x="25.55" y="99.11" width="2.92" height="0.91" fill="#6a9955"/><rect x="29.20" y="99.11" width="2.19" height="0.91" fill="#6a9955"/><rect x="32.12" y="99.11" width="5.11" height="0.91" fill="#6a9955"/><rect x="37.96" y="99.11" width="3.65" height="0.91" fill="#6a9955"/><rect x="42.34" y="99.11" width="2.19" height="0.91" fill="#6a9955"/><rect x="45.26" y="99.11" width="1.24" height="0.91" fill="#6a9955"/><rect x="0.00" y="100.58" width="1.46" height="0.91" fill="#6a9955"/><rect x="2.19" y="100.58" width="1.46" height="0.91" fill="#6a9955"/><rect x="4.38" y="100.58" width="5.84" height="0.91" fill="#6a9955"/><rect x="10.95" y="100.58" width="2.19" height="0.91" fill="#6a9955"/><rect x="13.87" y="100.58" width="5.11" height="0.91" fill="#6a9955"/><rect x="19.71" y="100.58" width="3.65" height="0.91" fill="#6a9955"/><rect x="24.09" y="100.58" width="1.46" height="0.91" fill="#6a9955"/><rect x="26.28" y="100.58" width="3.65" height="0.91" fill="#6a9955"/><rect x="30.66" y="100.58" width="1.46" height="0.91" fill="#6a9955"/><rect x="32.85" y="100.58" width="3.65" height="0.91" fill="#6a9955"/><rect x="37.23" y="100.58" width="1.46" height="0.91" fill="#6a9955"/><rect x="39.42" y="100.58" width="5.11" height="0.91" fill="#6a9955"/><rect x="0.00" y="102.05" width="1.46" height="0.91" fill="#6a9955"/><rect x="2.19" y="102.05" width="2.19" height="0.91" fill="#6a9955"/><rect x="5.11" y="102.05" width="2.92" height="0.91" fill="#6a9955"/><rect x="8.76" y="102.05" width="1.46" height="0.91" fill="#6a9955"/><rect x="10.95" y="102.05" width="6.57" height="0.91" fill="#6a9955"/><rect x="18.25" y="102.05" width="5.11" height="0.91" fill="#6a9955"/><rect x="24.09" y="102.05" width="3.65" height="0.91" fill="#6a9955"/><rect x="28.47" y="102.05" width="1.46" height="0.91" fill="#6a9955"/><rect x="30.66" y="102.05" width="3.65" height="0.91" fill="#6a9955"/><rect x="35.04" y="102.05" width="5.11" height="0.91" fill="#6a9955"/><rect x="0.00" y="103.52" width="1.46" height="0.91" fill="#6a9955"/><rect x="2.19" y="103.52" width="2.92" height="0.91" fill="#6a9955"/><rect x="5.84" y="103.52" width="2.19" height="0.91" fill="#6a9955"/><rect x="8.76" y="103.52" width="1.46" height="0.91" fill="#6a9955"/><rect x="10.95" y="103.52" width="4.38" height="0.91" fill="#6a9955"/><rect x="16.06" y="103.52" width="1.46" height="0.91" fill="#6a9955"/><rect x="18.25" y="103.52" width="2.19" height="0.91" fill="#6a9955"/><rect x="21.17" y="103.52" width="8.03" height="0.91" fill="#6a9955"/><rect x="29.93" y="103.52" width="3.65" height="0.91" fill="#6a9955"/><rect x="34.31" y="103.52" width="5.11" height="0.91" fill="#6a9955"/><rect x="0.00" y="104.99" width="1.46" height="0.91" fill="#6a9955"/><rect x="0.00" y="106.46" width="1.46" height="0.91" fill="#6a9955"/><rect x="4.38" y="106.46" width="28.47" height="0.91" fill="#6a9955"/><rect x="0.00" y="107.93" width="1.46" height="0.91" fill="#6a9955"/><rect x="0.00" y="109.40" width="1.46" height="0.91" fill="#6a9955"/><rect x="2.19" y="109.40" width="3.65" height="0.91" fill="#6a9955"/><rect x="6.57" y="109.40" width="1.46" height="0.91" fill="#6a9955"/><rect x="8.76" y="109.40" width="5.11" height="0.91" fill="#6a9955"/><rect x="14.60" y="109.40" width="2.92" height="0.91" fill="#6a9955"/><rect x="18.25" y="109.40" width="1.46" height="0.91" fill="#6a9955"/><rect x="20.44" y="109.40" width="4.38" height="0.91" fill="#6a9955"/><rect x="25.55" y="109.40" width="1.46" height="0.91" fill="#6a9955"/><rect x="27.74" y="109.40" width="2.19" height="0.91" fill="#6a9955"/><rect x="30.66" y="109.40" width="8.03" height="0.91" fill="#6a9955"/><rect x="0.00" y="110.87" width="1.46" height="0.91" fill="#6a9955"/><rect x="0.00" y="112.34" width="1.46" height="0.91" fill="#6a9955"/><rect x="2.19" y="112.34" width="3.65" height="0.91" fill="#6a9955"/><rect x="6.57" y="112.34" width="8.76" height="0.91" fill="#6a9955"/><rect x="16.06" y="112.34" width="1.46" height="0.91" fill="#6a9955"/><rect x="18.25" y="112.34" width="5.11" height="0.91" fill="#6a9955"/><rect x="24.09" y="112.34" width="3.65" height="0.91" fill="#6a9955"/><rect x="28.47" y="112.34" width="1.46" height="0.91" fill="#6a9955"/><rect x="30.66" y="112.34" width="2.19" height="0.91" fill="#6a9955"/><rect x="33.58" y="112.34" width="5.11" height="0.91" fill="#6a9955"/><rect x="39.42" y="112.34" width="7.08" height="0.91" fill="#6a9955"/><rect x="0.00" y="113.81" width="1.46" height="0.91" fill="#6a9955"/><rect x="2.19" y="113.81" width="2.92" height="0.91" fill="#6a9955"/><rect x="5.84" y="113.81" width="5.11" height="0.91" fill="#6a9955"/><rect x="11.68" y="113.81" width="5.84" height="0.91" fill="#6a9955"/><rect x="18.25" y="113.81" width="1.46" height="0.91" fill="#6a9955"/><rect x="20.44" y="113.81" width="2.92" height="0.91" fill="#6a9955"/><rect x="24.09" y="113.81" width="3.65" height="0.91" fill="#6a9955"/><rect x="0.00" y="115.28" width="1.46" height="0.91" fill="#6a9955"/><rect x="2.19" y="115.28" width="12.41" height="0.91" fill="#6a9955"/><rect x="15.33" y="115.28" width="2.92" height="0.91" fill="#6a9955"/><rect x="18.98" y="115.28" width="2.19" height="0.91" fill="#6a9955"/><rect x="21.90" y="115.28" width="3.65" height="0.91" fill="#6a9955"/><rect x="26.28" y="115.28" width="1.46" height="0.91" fill="#6a9955"/><rect x="28.47" y="115.28" width="3.65" height="0.91" fill="#6a9955"/><rect x="32.85" y="115.28" width="3.65" height="0.91" fill="#6a9955"/><rect x="37.23" y="115.28" width="3.65" height="0.91" fill="#6a9955"/><rect x="41.61" y="115.28" width="2.19" height="0.91" fill="#6a9955"/><rect x="44.53" y="115.28" width="1.97" height="0.91" fill="#6a9955"/><rect x="0.00" y="116.75" width="1.46" height="0.91" fill="#6a9955"/><rect x="2.19" y="116.75" width="2.92" height="0.91" fill="#6a9955"/><rect x="5.84" y="116.75" width="2.19" height="0.91" fill="#6a9955"/><rect x="8.76" y="116.75" width="3.65" height="0.91" fill="#6a9955"/><rect x="13.14" y="116.75" width="5.11" height="0.91" fill="#6a9955"/><rect x="0.00" y="118.22" width="1.46" height="0.91" fill="#6a9955"/><rect x="0.00" y="119.69" width="1.46" height="0.91" fill="#6a9955"/><rect x="4.38" y="119.69" width="28.47" height="0.91" fill="#6a9955"/><rect x="0.00" y="121.16" width="1.46" height="0.91" fill="#6a9955"/><rect x="0.00" y="122.63" width="1.46" height="0.91" fill="#6a9955"/><rect x="2.19" y="122.63" width="0.73" height="0.91" fill="#6a9955"/><rect x="3.65" y="122.63" width="2.92" height="0.91" fill="#6a9955"/><rect x="7.30" y="122.63" width="1.46" height="0.91" fill="#6a9955"/><rect x="9.49" y="122.63" width="8.76" height="0.91" fill="#6a9955"/><rect x="18.98" y="122.63" width="2.92" height="0.91" fill="#6a9955"/><rect x="22.63" y="122.63" width="4.38" height="0.91" fill="#6a9955"/><rect x="27.74" y="122.63" width="1.46" height="0.91" fill="#6a9955"/><rect x="29.93" y="122.63" width="4.38" height="0.91" fill="#6a9955"/><rect x="35.04" y="122.63" width="1.46" height="0.91" fill="#6a9955"/><rect x="37.23" y="122.63" width="3.65" height="0.91" fill="#6a9955"/><rect x="41.61" y="122.63" width="4.89" height="0.91" fill="#6a9955"/><rect x="0.00" y="124.10" width="1.46" height="0.91" fill="#6a9955"/><rect x="0.00" y="125.57" width="1.46" height="0.91" fill="#6a9955"/><rect x="2.19" y="125.57" width="12.41" height="0.91" fill="#6a9955"/><rect x="15.33" y="125.57" width="5.11" height="0.91" fill="#6a9955"/><rect x="21.17" y="125.57" width="2.19" height="0.91" fill="#6a9955"/><rect x="24.09" y="125.57" width="5.84" height="0.91" fill="#6a9955"/><rect x="30.66" y="125.57" width="4.38" height="0.91" fill="#6a9955"/><rect x="0.00" y="127.04" width="2.92" height="0.91" fill="#569cd6"/><rect x="3.65" y="127.04" width="12.41" height="0.91" fill="#dcdcaa"/><rect x="16.06" y="127.04" width="0.73" height="0.91" fill="#ffd700"/><rect x="16.79" y="127.04" width="3.65" height="0.91" fill="#9cdcfe"/><rect x="21.17" y="127.04" width="3.65" height="0.91" fill="#4ec9b0"/><rect x="24.82" y="127.04" width="0.73" height="0.91" fill="#ffd700"/><rect x="26.28" y="127.04" width="0.73" height="0.91" fill="#ffd700"/><rect x="27.01" y="127.04" width="5.84" height="0.91" fill="#9cdcfe"/><rect x="33.58" y="127.04" width="3.65" height="0.91" fill="#4ec9b0"/><rect x="37.23" y="127.04" width="0.73" height="0.91" fill="#ffd700"/><rect x="38.69" y="127.04" width="0.73" height="0.91" fill="#ffd700"/><rect x="2.92" y="128.51" width="5.84" height="0.91" fill="#9cdcfe"/><rect x="9.49" y="128.51" width="0.73" height="0.91" fill="#d4d4d4"/><rect x="10.95" y="128.51" width="10.22" height="0.91" fill="#9cdcfe"/><rect x="21.17" y="128.51" width="0.73" height="0.91" fill="#d4d4d4"/><rect x="21.90" y="128.51" width="3.65" height="0.91" fill="#dcdcaa"/><rect x="25.55" y="128.51" width="1.46" height="0.91" fill="#ffd700"/><rect x="2.92" y="129.98" width="10.22" height="0.91" fill="#9cdcfe"/><rect x="13.14" y="129.98" width="0.73" height="0.91" fill="#d4d4d4"/><rect x="13.87" y="129.98" width="2.19" height="0.91" fill="#dcdcaa"/><rect x="16.06" y="129.98" width="0.73" height="0.91" fill="#ffd700"/><rect x="16.79" y="129.98" width="3.65" height="0.91" fill="#9cdcfe"/><rect x="20.44" y="129.98" width="0.73" height="0.91" fill="#ffd700"/><rect x="2.92" y="131.45" width="4.38" height="0.91" fill="#c586c0"/><rect x="0.00" y="132.92" width="0.73" height="0.91" fill="#ffd700"/><rect x="0.00" y="135.86" width="2.92" height="0.91" fill="#569cd6"/><rect x="3.65" y="135.86" width="2.92" height="0.91" fill="#dcdcaa"/><rect x="6.57" y="135.86" width="1.46" height="0.91" fill="#ffd700"/><rect x="8.76" y="135.86" width="0.73" height="0.91" fill="#ffd700"/><rect x="2.92" y="137.33" width="9.49" height="0.91" fill="#9cdcfe"/><rect x="12.41" y="137.33" width="0.73" height="0.91" fill="#d4d4d4"/><rect x="13.14" y="137.33" width="3.65" height="0.91" fill="#dcdcaa"/><rect x="16.79" y="137.33" width="0.73" height="0.91" fill="#ffd700"/><rect x="17.52" y="137.33" width="2.19" height="0.91" fill="#dcdcaa"/><rect x="19.71" y="137.33" width="0.73" height="0.91" fill="#ffd700"/><rect x="20.44" y="137.33" width="12.41" height="0.91" fill="#dcdcaa"/><rect x="32.85" y="137.33" width="0.73" height="0.91" fill="#ffd700"/><rect x="33.58" y="137.33" width="8.03" height="0.91" fill="#9cdcfe"/><rect x="41.61" y="137.33" width="0.73" height="0.91" fill="#d4d4d4"/><rect x="42.34" y="137.33" width="4.16" height="0.91" fill="#4ec9b0"/><rect x="0.00" y="138.80" width="0.73" height="0.91" fill="#ffd700"/><rect x="0.00" y="141.74" width="1.46" height="0.91" fill="#6a9955"/><rect x="2.19" y="141.74" width="5.11" height="0.91" fill="#6a9955"/><rect x="8.03" y="141.74" width="5.11" height="0.91" fill="#6a9955"/><rect x="13.87" y="141.74" width="2.19" height="0.91" fill="#6a9955"/><rect x="16.79" y="141.74" width="5.11" height="0.91" fill="#6a9955"/><rect x="22.63" y="141.74" width="6.57" height="0.91" fill="#6a9955"/><rect x="0.00" y="143.21" width="2.92" height="0.91" fill="#569cd6"/><rect x="3.65" y="143.21" width="5.11" height="0.91" fill="#dcdcaa"/><rect x="8.76" y="143.21" width="1.46" height="0.91" fill="#ffd700"/><rect x="10.95" y="143.21" width="0.73" height="0.91" fill="#d4d4d4"/><rect x="11.68" y="143.21" width="4.38" height="0.91" fill="#4ec9b0"/><rect x="16.79" y="143.21" width="0.73" height="0.91" fill="#ffd700"/><rect x="18.25" y="143.21" width="4.38" height="0.91" fill="#c586c0"/><rect x="23.36" y="143.21" width="9.49" height="0.91" fill="#9cdcfe"/><rect x="32.85" y="143.21" width="0.73" height="0.91" fill="#d4d4d4"/><rect x="33.58" y="143.21" width="2.92" height="0.91" fill="#dcdcaa"/><rect x="36.50" y="143.21" width="1.46" height="0.91" fill="#ffd700"/><rect x="38.69" y="143.21" width="0.73" height="0.91" fill="#ffd700"/><rect x="0.00" y="146.15" width="1.46" height="0.91" fill="#6a9955"/><rect x="2.19" y="146.15" width="7.30" height="0.91" fill="#6a9955"/><rect x="10.22" y="146.15" width="3.65" height="0.91" fill="#6a9955"/><rect x="14.60" y="146.15" width="0.73" height="0.91" fill="#6a9955"/><rect x="16.06" y="146.15" width="2.19" height="0.91" fill="#6a9955"/><rect x="18.98" y="146.15" width="5.11" height="0.91" fill="#6a9955"/><rect x="24.82" y="146.15" width="6.57" height="0.91" fill="#6a9955"/><rect x="32.12" y="146.15" width="3.65" height="0.91" fill="#6a9955"/><rect x="36.50" y="146.15" width="1.46" height="0.91" fill="#6a9955"/><rect x="38.69" y="146.15" width="2.92" height="0.91" fill="#6a9955"/><rect x="42.34" y="146.15" width="1.46" height="0.91" fill="#6a9955"/><rect x="0.00" y="147.62" width="1.46" height="0.91" fill="#6a9955"/><rect x="2.19" y="147.62" width="2.19" height="0.91" fill="#6a9955"/><rect x="5.11" y="147.62" width="6.57" height="0.91" fill="#6a9955"/><rect x="12.41" y="147.62" width="6.57" height="0.91" fill="#6a9955"/><rect x="19.71" y="147.62" width="5.11" height="0.91" fill="#6a9955"/><rect x="25.55" y="147.62" width="5.11" height="0.91" fill="#6a9955"/><rect x="31.39" y="147.62" width="2.19" height="0.91" fill="#6a9955"/><rect x="34.31" y="147.62" width="1.46" height="0.91" fill="#6a9955"/><rect x="36.50" y="147.62" width="2.19" height="0.91" fill="#6a9955"/><rect x="0.00" y="149.09" width="1.46" height="0.91" fill="#6a9955"/><rect x="2.19" y="149.09" width="3.65" height="0.91" fill="#6a9955"/><rect x="6.57" y="149.09" width="2.92" height="0.91" fill="#6a9955"/><rect x="10.22" y="149.09" width="3.65" height="0.91" fill="#6a9955"/><rect x="14.60" y="149.09" width="4.38" height="0.91" fill="#6a9955"/><rect x="19.71" y="149.09" width="2.92" height="0.91" fill="#6a9955"/><rect x="23.36" y="149.09" width="2.19" height="0.91" fill="#6a9955"/><rect x="26.28" y="149.09" width="2.19" height="0.91" fill="#6a9955"/><rect x="29.20" y="149.09" width="6.57" height="0.91" fill="#6a9955"/><rect x="36.50" y="149.09" width="5.11" height="0.91" fill="#6a9955"/><rect x="42.34" y="149.09" width="4.16" height="0.91" fill="#6a9955"/><rect x="0.00" y="150.56" width="1.46" height="0.91" fill="#6a9955"/><rect x="2.19" y="150.56" width="2.19" height="0.91" fill="#6a9955"/><rect x="5.11" y="150.56" width="2.92" height="0.91" fill="#6a9955"/><rect x="8.76" y="150.56" width="8.76" height="0.91" fill="#6a9955"/><rect x="18.25" y="150.56" width="3.65" height="0.91" fill="#6a9955"/><rect x="22.63" y="150.56" width="2.92" height="0.91" fill="#6a9955"/><rect x="26.28" y="150.56" width="1.46" height="0.91" fill="#6a9955"/><rect x="28.47" y="150.56" width="4.38" height="0.91" fill="#6a9955"/><rect x="33.58" y="150.56" width="3.65" height="0.91" fill="#6a9955"/><rect x="37.96" y="150.56" width="2.19" height="0.91" fill="#6a9955"/><rect x="40.88" y="150.56" width="5.62" height="0.91" fill="#6a9955"/><rect x="0.00" y="152.03" width="1.46" height="0.91" fill="#6a9955"/><rect x="2.19" y="152.03" width="1.46" height="0.91" fill="#6a9955"/><rect x="4.38" y="152.03" width="0.73" height="0.91" fill="#6a9955"/><rect x="5.84" y="152.03" width="3.65" height="0.91" fill="#6a9955"/><rect x="10.22" y="152.03" width="7.30" height="0.91" fill="#6a9955"/><rect x="18.25" y="152.03" width="1.46" height="0.91" fill="#6a9955"/><rect x="20.44" y="152.03" width="14.60" height="0.91" fill="#6a9955"/><rect x="0.00" y="153.50" width="2.92" height="0.91" fill="#569cd6"/><rect x="3.65" y="153.50" width="7.30" height="0.91" fill="#dcdcaa"/><rect x="10.95" y="153.50" width="0.73" height="0.91" fill="#ffd700"/><rect x="11.68" y="153.50" width="0.73" height="0.91" fill="#9cdcfe"/><rect x="13.14" y="153.50" width="0.73" height="0.91" fill="#d4d4d4"/><rect x="13.87" y="153.50" width="4.38" height="0.91" fill="#4ec9b0"/><rect x="18.25" y="153.50" width="0.73" height="0.91" fill="#ffd700"/><rect x="19.71" y="153.50" width="0.73" height="0.91" fill="#ffd700"/><rect x="2.92" y="154.97" width="9.49" height="0.91" fill="#9cdcfe"/><rect x="12.41" y="154.97" width="0.73" height="0.91" fill="#d4d4d4"/><rect x="13.14" y="154.97" width="3.65" height="0.91" fill="#dcdcaa"/><rect x="16.79" y="154.97" width="0.73" height="0.91" fill="#ffd700"/><rect x="17.52" y="154.97" width="0.73" height="0.91" fill="#9cdcfe"/><rect x="18.25" y="154.97" width="0.73" height="0.91" fill="#ffd700"/><rect x="2.92" y="156.44" width="1.46" height="0.91" fill="#6a9955"/><rect x="5.11" y="156.44" width="1.46" height="0.91" fill="#6a9955"/><rect x="7.30" y="156.44" width="2.19" height="0.91" fill="#6a9955"/><rect x="10.22" y="156.44" width="6.57" height="0.91" fill="#6a9955"/><rect x="17.52" y="156.44" width="5.11" height="0.91" fill="#6a9955"/><rect x="23.36" y="156.44" width="1.46" height="0.91" fill="#6a9955"/><rect x="25.55" y="156.44" width="0.73" height="0.91" fill="#6a9955"/><rect x="27.01" y="156.44" width="10.95" height="0.91" fill="#6a9955"/><rect x="38.69" y="156.44" width="2.92" height="0.91" fill="#6a9955"/><rect x="42.34" y="156.44" width="3.65" height="0.91" fill="#6a9955"/><rect x="2.92" y="157.91" width="1.46" height="0.91" fill="#6a9955"/><rect x="5.11" y="157.91" width="1.46" height="0.91" fill="#6a9955"/><rect x="7.30" y="157.91" width="3.65" height="0.91" fill="#6a9955"/><rect x="11.68" y="157.91" width="5.84" height="0.91" fill="#6a9955"/><rect x="18.25" y="157.91" width="1.46" height="0.91" fill="#6a9955"/><rect x="20.44" y="157.91" width="2.92" height="0.91" fill="#6a9955"/><rect x="24.09" y="157.91" width="2.92" height="0.91" fill="#6a9955"/><rect x="27.74" y="157.91" width="2.19" height="0.91" fill="#6a9955"/><rect x="30.66" y="157.91" width="1.46" height="0.91" fill="#6a9955"/><rect x="32.85" y="157.91" width="5.11" height="0.91" fill="#6a9955"/><rect x="38.69" y="157.91" width="2.19" height="0.91" fill="#6a9955"/><rect x="41.61" y="157.91" width="2.19" height="0.91" fill="#6a9955"/><rect x="44.53" y="157.91" width="1.97" height="0.91" fill="#6a9955"/><rect x="2.92" y="159.38" width="1.46" height="0.91" fill="#6a9955"/><rect x="5.11" y="159.38" width="2.19" height="0.91" fill="#6a9955"/><rect x="8.03" y="159.38" width="10.22" height="0.91" fill="#6a9955"/><rect x="18.98" y="159.38" width="2.92" height="0.91" fill="#6a9955"/><rect x="22.63" y="159.38" width="2.19" height="0.91" fill="#6a9955"/><rect x="25.55" y="159.38" width="5.84" height="0.91" fill="#6a9955"/><rect x="32.12" y="159.38" width="2.19" height="0.91" fill="#6a9955"/><rect x="35.04" y="159.38" width="2.19" height="0.91" fill="#6a9955"/><rect x="37.96" y="159.38" width="5.11" height="0.91" fill="#6a9955"/><rect x="43.80" y="159.38" width="2.70" height="0.91" fill="#6a9955"/><rect x="2.92" y="160.85" width="1.46" height="0.91" fill="#6a9955"/><rect x="5.11" y="160.85" width="2.19" height="0.91" fill="#6a9955"/><rect x="8.03" y="160.85" width="2.19" height="0.91" fill="#6a9955"/><rect x="10.95" y="160.85" width="3.65" height="0.91" fill="#6a9955"/><rect x="15.33" y="160.85" width="1.46" height="0.91" fill="#6a9955"/><rect x="17.52" y="160.85" width="5.84" height="0.91" fill="#6a9955"/><rect x="2.92" y="162.32" width="1.46" height="0.91" fill="#6a9955"/><rect x="5.11" y="162.32" width="2.92" height="0.91" fill="#6a9955"/><rect x="8.76" y="162.32" width="2.19" height="0.91" fill="#6a9955"/><rect x="11.68" y="162.32" width="3.65" height="0.91" fill="#6a9955"/><rect x="16.06" y="162.32" width="2.92" height="0.91" fill="#6a9955"/><rect x="19.71" y="162.32" width="16.06" height="0.91" fill="#6a9955"/><rect x="2.92" y="163.79" width="1.46" height="0.91" fill="#6a9955"/><rect x="5.11" y="163.79" width="2.19" height="0.91" fill="#6a9955"/><rect x="8.03" y="163.79" width="10.95" height="0.91" fill="#6a9955"/><rect x="2.92" y="165.26" width="1.46" height="0.91" fill="#c586c0"/><rect x="5.11" y="165.26" width="0.73" height="0.91" fill="#9cdcfe"/><rect x="5.84" y="165.26" width="0.73" height="0.91" fill="#d4d4d4"/><rect x="7.30" y="165.26" width="1.46" height="0.91" fill="#9cdcfe"/><rect x="9.49" y="165.26" width="1.46" height="0.91" fill="#d4d4d4"/><rect x="11.68" y="165.26" width="0.73" height="0.91" fill="#9cdcfe"/><rect x="12.41" y="165.26" width="0.73" height="0.91" fill="#d4d4d4"/><rect x="13.14" y="165.26" width="5.11" height="0.91" fill="#dcdcaa"/><rect x="18.25" y="165.26" width="1.46" height="0.91" fill="#ffd700"/><rect x="19.71" y="165.26" width="0.73" height="0.91" fill="#d4d4d4"/><rect x="20.44" y="165.26" width="0.73" height="0.91" fill="#ffd700"/><rect x="21.17" y="165.26" width="0.73" height="0.91" fill="#d4d4d4"/><rect x="21.90" y="165.26" width="10.22" height="0.91" fill="#9cdcfe"/><rect x="32.12" y="165.26" width="0.73" height="0.91" fill="#ffd700"/><rect x="32.85" y="165.26" width="0.73" height="0.91" fill="#d4d4d4"/><rect x="34.31" y="165.26" width="0.73" height="0.91" fill="#d4d4d4"/><rect x="35.04" y="165.26" width="1.46" height="0.91" fill="#9cdcfe"/><rect x="37.23" y="165.26" width="0.73" height="0.91" fill="#ffd700"/><rect x="5.84" y="166.73" width="6.57" height="0.91" fill="#9cdcfe"/><rect x="13.14" y="166.73" width="1.46" height="0.91" fill="#d4d4d4"/><rect x="15.33" y="166.73" width="2.19" height="0.91" fill="#9cdcfe"/><rect x="17.52" y="166.73" width="0.73" height="0.91" fill="#d4d4d4"/><rect x="18.25" y="166.73" width="3.65" height="0.91" fill="#dcdcaa"/><rect x="21.90" y="166.73" width="1.46" height="0.91" fill="#ffd700"/><rect x="23.36" y="166.73" width="0.73" height="0.91" fill="#d4d4d4"/><rect x="24.09" y="166.73" width="0.73" height="0.91" fill="#ffd700"/><rect x="24.82" y="166.73" width="2.19" height="0.91" fill="#9cdcfe"/><rect x="27.01" y="166.73" width="0.73" height="0.91" fill="#d4d4d4"/><rect x="27.74" y="166.73" width="7.30" height="0.91" fill="#4ec9b0"/><rect x="35.04" y="166.73" width="0.73" height="0.91" fill="#d4d4d4"/><rect x="35.77" y="166.73" width="2.19" height="0.91" fill="#9cdcfe"/><rect x="37.96" y="166.73" width="0.73" height="0.91" fill="#d4d4d4"/><rect x="38.69" y="166.73" width="6.57" height="0.91" fill="#4ec9b0"/><rect x="45.26" y="166.73" width="0.73" height="0.91" fill="#ffd700"/><rect x="5.84" y="168.20" width="2.19" height="0.91" fill="#9cdcfe"/><rect x="8.03" y="168.20" width="0.73" height="0.91" fill="#d4d4d4"/><rect x="8.76" y="168.20" width="6.57" height="0.91" fill="#dcdcaa"/><rect x="15.33" y="168.20" width="0.73" height="0.91" fill="#ffd700"/><rect x="16.06" y="168.20" width="0.73" height="0.91" fill="#d4d4d4"/><rect x="16.79" y="168.20" width="9.49" height="0.91" fill="#9cdcfe"/><rect x="26.28" y="168.20" width="0.73" height="0.91" fill="#ffd700"/><rect x="27.01" y="168.20" width="0.73" height="0.91" fill="#9cdcfe"/><rect x="27.74" y="168.20" width="0.73" height="0.91" fill="#d4d4d4"/><rect x="28.47" y="168.20" width="5.11" height="0.91" fill="#dcdcaa"/><rect x="33.58" y="168.20" width="1.46" height="0.91" fill="#ffd700"/><rect x="35.04" y="168.20" width="0.73" height="0.91" fill="#d4d4d4"/><rect x="36.50" y="168.20" width="0.73" height="0.91" fill="#d4d4d4"/><rect x="37.23" y="168.20" width="9.27" height="0.91" fill="#9cdcfe"/><rect x="5.84" y="169.67" width="2.19" height="0.91" fill="#9cdcfe"/><rect x="8.03" y="169.67" width="0.73" height="0.91" fill="#d4d4d4"/><rect x="8.76" y="169.67" width="5.84" height="0.91" fill="#dcdcaa"/><rect x="14.60" y="169.67" width="0.73" height="0.91" fill="#ffd700"/><rect x="15.33" y="169.67" width="0.73" height="0.91" fill="#b5cea8"/><rect x="16.06" y="169.67" width="0.73" height="0.91" fill="#ffd700"/><rect x="17.52" y="169.67" width="1.46" height="0.91" fill="#6a9955"/><rect x="19.71" y="169.67" width="1.46" height="0.91" fill="#6a9955"/><rect x="21.90" y="169.67" width="2.92" height="0.91" fill="#6a9955"/><rect x="25.55" y="169.67" width="2.92" height="0.91" fill="#6a9955"/><rect x="29.20" y="169.67" width="2.19" height="0.91" fill="#6a9955"/><rect x="32.12" y="169.67" width="2.19" height="0.91" fill="#6a9955"/><rect x="35.04" y="169.67" width="5.84" height="0.91" fill="#6a9955"/><rect x="41.61" y="169.67" width="1.46" height="0.91" fill="#6a9955"/><rect x="43.80" y="169.67" width="2.70" height="0.91" fill="#6a9955"/><rect x="2.92" y="171.14" width="0.73" height="0.91" fill="#ffd700"/><rect x="0.00" y="172.61" width="0.73" height="0.91" fill="#ffd700"/><rect x="0.00" y="175.55" width="1.46" height="0.91" fill="#6a9955"/><rect x="2.19" y="175.55" width="9.49" height="0.91" fill="#6a9955"/><rect x="12.41" y="175.55" width="1.46" height="0.91" fill="#6a9955"/><rect x="14.60" y="175.55" width="1.46" height="0.91" fill="#6a9955"/><rect x="16.79" y="175.55" width="6.57" height="0.91" fill="#6a9955"/><rect x="24.09" y="175.55" width="2.92" height="0.91" fill="#6a9955"/><rect x="27.74" y="175.55" width="3.65" height="0.91" fill="#6a9955"/><rect x="32.12" y="175.55" width="0.73" height="0.91" fill="#6a9955"/><rect x="33.58" y="175.55" width="5.84" height="0.91" fill="#6a9955"/><rect x="0.00" y="177.02" width="1.46" height="0.91" fill="#6a9955"/><rect x="2.19" y="177.02" width="1.46" height="0.91" fill="#6a9955"/><rect x="4.38" y="177.02" width="1.46" height="0.91" fill="#6a9955"/><rect x="6.57" y="177.02" width="2.92" height="0.91" fill="#6a9955"/><rect x="10.22" y="177.02" width="1.46" height="0.91" fill="#6a9955"/><rect x="12.41" y="177.02" width="2.92" height="0.91" fill="#6a9955"/><rect x="16.06" y="177.02" width="2.19" height="0.91" fill="#6a9955"/><rect x="18.98" y="177.02" width="5.11" height="0.91" fill="#6a9955"/><rect x="24.82" y="177.02" width="7.30" height="0.91" fill="#6a9955"/><rect x="32.85" y="177.02" width="1.46" height="0.91" fill="#6a9955"/><rect x="35.04" y="177.02" width="2.19" height="0.91" fill="#6a9955"/><rect x="37.96" y="177.02" width="5.11" height="0.91" fill="#6a9955"/><rect x="43.80" y="177.02" width="2.70" height="0.91" fill="#6a9955"/><rect x="0.00" y="178.49" width="2.92" height="0.91" fill="#569cd6"/><rect x="3.65" y="178.49" width="9.49" height="0.91" fill="#9cdcfe"/><rect x="13.87" y="178.49" width="4.38" height="0.91" fill="#569cd6"/><rect x="18.98" y="178.49" width="0.73" height="0.91" fill="#ffd700"/><rect x="2.92" y="179.96" width="0.73" height="0.91" fill="#9cdcfe"/><rect x="10.22" y="179.96" width="5.11" height="0.91" fill="#4ec9b0"/><rect x="2.92" y="181.43" width="3.65" height="0.91" fill="#9cdcfe"/><rect x="10.22" y="181.43" width="5.11" height="0.91" fill="#4ec9b0"/><rect x="2.92" y="182.90" width="6.57" height="0.91" fill="#9cdcfe"/><rect x="10.22" y="182.90" width="2.92" height="0.91" fill="#4ec9b0"/><rect x="0.00" y="184.37" width="0.73" height="0.91" fill="#ffd700"/><rect x="0.00" y="187.31" width="2.92" height="0.91" fill="#569cd6"/><rect x="3.65" y="187.31" width="0.73" height="0.91" fill="#ffd700"/><rect x="4.38" y="187.31" width="0.73" height="0.91" fill="#9cdcfe"/><rect x="5.84" y="187.31" width="0.73" height="0.91" fill="#d4d4d4"/><rect x="6.57" y="187.31" width="9.49" height="0.91" fill="#9cdcfe"/><rect x="16.06" y="187.31" width="0.73" height="0.91" fill="#ffd700"/><rect x="17.52" y="187.31" width="3.65" height="0.91" fill="#dcdcaa"/><rect x="21.17" y="187.31" width="0.73" height="0.91" fill="#ffd700"/><rect x="21.90" y="187.31" width="2.19" height="0.91" fill="#9cdcfe"/><rect x="24.82" y="187.31" width="1.46" height="0.91" fill="#ffd700"/><rect x="26.28" y="187.31" width="2.92" height="0.91" fill="#4ec9b0"/><rect x="29.20" y="187.31" width="0.73" height="0.91" fill="#ffd700"/><rect x="30.66" y="187.31" width="0.73" height="0.91" fill="#ffd700"/><rect x="31.39" y="187.31" width="2.19" height="0.91" fill="#4ec9b0"/><rect x="33.58" y="187.31" width="0.73" height="0.91" fill="#d4d4d4"/><rect x="35.04" y="187.31" width="3.65" height="0.91" fill="#4ec9b0"/><rect x="38.69" y="187.31" width="0.73" height="0.91" fill="#ffd700"/><rect x="40.15" y="187.31" width="0.73" height="0.91" fill="#ffd700"/><rect x="2.92" y="188.78" width="3.65" height="0.91" fill="#9cdcfe"/><rect x="7.30" y="188.78" width="1.46" height="0.91" fill="#d4d4d4"/><rect x="9.49" y="188.78" width="0.73" height="0.91" fill="#9cdcfe"/><rect x="10.22" y="188.78" width="0.73" height="0.91" fill="#d4d4d4"/><rect x="10.95" y="188.78" width="3.65" height="0.91" fill="#9cdcfe"/><rect x="14.60" y="188.78" width="0.73" height="0.91" fill="#d4d4d4"/><rect x="15.33" y="188.78" width="3.65" height="0.91" fill="#dcdcaa"/><rect x="18.98" y="188.78" width="1.46" height="0.91" fill="#ffd700"/><rect x="2.92" y="190.25" width="1.46" height="0.91" fill="#c586c0"/><rect x="5.11" y="190.25" width="0.73" height="0.91" fill="#d4d4d4"/><rect x="5.84" y="190.25" width="0.73" height="0.91" fill="#9cdcfe"/><rect x="6.57" y="190.25" width="0.73" height="0.91" fill="#d4d4d4"/><rect x="7.30" y="190.25" width="0.73" height="0.91" fill="#9cdcfe"/><rect x="8.03" y="190.25" width="0.73" height="0.91" fill="#d4d4d4"/><rect x="8.76" y="190.25" width="5.11" height="0.91" fill="#dcdcaa"/><rect x="13.87" y="190.25" width="0.73" height="0.91" fill="#ffd700"/><rect x="14.60" y="190.25" width="5.11" height="0.91" fill="#9cdcfe"/><rect x="19.71" y="190.25" width="0.73" height="0.91" fill="#d4d4d4"/><rect x="20.44" y="190.25" width="7.30" height="0.91" fill="#dcdcaa"/><rect x="27.74" y="190.25" width="1.46" height="0.91" fill="#ffd700"/><rect x="29.20" y="190.25" width="0.73" height="0.91" fill="#d4d4d4"/><rect x="30.66" y="190.25" width="3.65" height="0.91" fill="#9cdcfe"/><rect x="34.31" y="190.25" width="0.73" height="0.91" fill="#ffd700"/><rect x="35.77" y="190.25" width="0.73" height="0.91" fill="#ffd700"/><rect x="5.84" y="191.72" width="4.38" height="0.91" fill="#c586c0"/><rect x="10.95" y="191.72" width="0.73" height="0.91" fill="#b5cea8"/><rect x="11.68" y="191.72" width="0.73" height="0.91" fill="#d4d4d4"/><rect x="13.14" y="191.72" width="2.19" height="0.91" fill="#569cd6"/><rect x="2.92" y="193.19" width="0.73" height="0.91" fill="#ffd700"/><rect x="2.92" y="194.66" width="2.19" height="0.91" fill="#569cd6"/><rect x="5.84" y="194.66" width="1.46" height="0.91" fill="#9cdcfe"/><rect x="8.03" y="194.66" width="5.11" height="0.91" fill="#4ec9b0"/><rect x="2.92" y="196.13" width="1.46" height="0.91" fill="#c586c0"/><rect x="5.11" y="196.13" width="0.73" height="0.91" fill="#d4d4d4"/><rect x="5.84" y="196.13" width="5.84" height="0.91" fill="#9cdcfe"/><rect x="11.68" y="196.13" width="0.73" height="0.91" fill="#d4d4d4"/><rect x="12.41" y="196.13" width="5.84" height="0.91" fill="#4ec9b0"/><rect x="18.98" y="196.13" width="1.46" height="0.91" fill="#d4d4d4"/><rect x="21.17" y="196.13" width="0.73" height="0.91" fill="#9cdcfe"/><rect x="21.90" y="196.13" width="0.73" height="0.91" fill="#d4d4d4"/><rect x="22.63" y="196.13" width="6.57" height="0.91" fill="#9cdcfe"/><rect x="29.93" y="196.13" width="0.73" height="0.91" fill="#ffd700"/><rect x="5.84" y="197.60" width="1.46" height="0.91" fill="#6a9955"/><rect x="8.03" y="197.60" width="2.92" height="0.91" fill="#6a9955"/><rect x="11.68" y="197.60" width="12.41" height="0.91" fill="#6a9955"/><rect x="24.82" y="197.60" width="5.84" height="0.91" fill="#6a9955"/><rect x="31.39" y="197.60" width="10.22" height="0.91" fill="#6a9955"/><rect x="42.34" y="197.60" width="4.16" height="0.91" fill="#6a9955"/><rect x="5.84" y="199.07" width="2.19" height="0.91" fill="#569cd6"/><rect x="8.76" y="199.07" width="2.19" height="0.91" fill="#9cdcfe"/><rect x="11.68" y="199.07" width="0.73" height="0.91" fill="#ffd700"/><rect x="12.41" y="199.07" width="0.73" height="0.91" fill="#b5cea8"/><rect x="13.14" y="199.07" width="0.73" height="0.91" fill="#ffd700"/><rect x="13.87" y="199.07" width="5.11" height="0.91" fill="#4ec9b0"/><rect x="5.84" y="200.54" width="5.11" height="0.91" fill="#9cdcfe"/><rect x="10.95" y="200.54" width="0.73" height="0.91" fill="#d4d4d4"/><rect x="11.68" y="200.54" width="5.11" height="0.91" fill="#dcdcaa"/><rect x="16.79" y="200.54" width="0.73" height="0.91" fill="#ffd700"/><rect x="17.52" y="200.54" width="0.73" height="0.91" fill="#b5cea8"/><rect x="18.25" y="200.54" width="0.73" height="0.91" fill="#d4d4d4"/><rect x="19.71" y="200.54" width="2.19" height="0.91" fill="#9cdcfe"/><rect x="21.90" y="200.54" width="0.73" height="0.91" fill="#ffd700"/><rect x="22.63" y="200.54" width="0.73" height="0.91" fill="#d4d4d4"/><rect x="23.36" y="200.54" width="1.46" height="0.91" fill="#ffd700"/><rect x="5.84" y="202.01" width="1.46" height="0.91" fill="#9cdcfe"/><rect x="8.03" y="202.01" width="0.73" height="0.91" fill="#d4d4d4"/><rect x="9.49" y="202.01" width="2.19" height="0.91" fill="#9cdcfe"/><rect x="11.68" y="202.01" width="0.73" height="0.91" fill="#ffd700"/><rect x="12.41" y="202.01" width="0.73" height="0.91" fill="#b5cea8"/><rect x="13.14" y="202.01" width="0.73" height="0.91" fill="#ffd700"/><rect x="2.92" y="203.48" width="0.73" height="0.91" fill="#ffd700"/><rect x="2.92" y="206.42" width="1.46" height="0.91" fill="#6a9955"/><rect x="5.11" y="206.42" width="4.38" height="0.91" fill="#6a9955"/><rect x="10.22" y="206.42" width="3.65" height="0.91" fill="#6a9955"/><rect x="14.60" y="206.42" width="5.84" height="0.91" fill="#6a9955"/><rect x="2.92" y="207.89" width="5.11" height="0.91" fill="#9cdcfe"/><rect x="8.76" y="207.89" width="1.46" height="0.91" fill="#d4d4d4"/><rect x="10.95" y="207.89" width="2.19" height="0.91" fill="#dcdcaa"/><rect x="13.14" y="207.89" width="0.73" height="0.91" fill="#ffd700"/><rect x="13.87" y="207.89" width="2.19" height="0.91" fill="#9cdcfe"/><rect x="16.06" y="207.89" width="0.73" height="0.91" fill="#ffd700"/><rect x="17.52" y="207.89" width="1.46" height="0.91" fill="#6a9955"/><rect x="19.71" y="207.89" width="4.38" height="0.91" fill="#6a9955"/><rect x="24.82" y="207.89" width="2.92" height="0.91" fill="#6a9955"/><rect x="28.47" y="207.89" width="2.19" height="0.91" fill="#6a9955"/><rect x="31.39" y="207.89" width="4.38" height="0.91" fill="#6a9955"/><rect x="36.50" y="207.89" width="2.19" height="0.91" fill="#6a9955"/><rect x="39.42" y="207.89" width="2.19" height="0.91" fill="#6a9955"/><rect x="42.34" y="207.89" width="4.16" height="0.91" fill="#6a9955"/><rect x="2.92" y="209.36" width="1.46" height="0.91" fill="#c586c0"/><rect x="5.11" y="209.36" width="2.19" height="0.91" fill="#dcdcaa"/><rect x="7.30" y="209.36" width="0.73" height="0.91" fill="#ffd700"/><rect x="8.03" y="209.36" width="2.19" height="0.91" fill="#9cdcfe"/><rect x="10.22" y="209.36" width="0.73" height="0.91" fill="#ffd700"/><rect x="11.68" y="209.36" width="0.73" height="0.91" fill="#d4d4d4"/><rect x="13.14" y="209.36" width="0.73" height="0.91" fill="#b5cea8"/><rect x="14.60" y="209.36" width="1.46" height="0.91" fill="#d4d4d4"/><rect x="16.79" y="209.36" width="2.19" height="0.91" fill="#9cdcfe"/><rect x="18.98" y="209.36" width="0.73" height="0.91" fill="#ffd700"/><rect x="19.71" y="209.36" width="2.19" height="0.91" fill="#dcdcaa"/><rect x="21.90" y="209.36" width="0.73" height="0.91" fill="#ffd700"/><rect x="22.63" y="209.36" width="2.19" height="0.91" fill="#9cdcfe"/><rect x="24.82" y="209.36" width="0.73" height="0.91" fill="#ffd700"/><rect x="25.55" y="209.36" width="0.73" height="0.91" fill="#d4d4d4"/><rect x="26.28" y="209.36" width="0.73" height="0.91" fill="#b5cea8"/><rect x="27.01" y="209.36" width="0.73" height="0.91" fill="#ffd700"/><rect x="28.47" y="209.36" width="1.46" height="0.91" fill="#d4d4d4"/><rect x="30.66" y="209.36" width="2.92" height="0.91" fill="#ce9178"/><rect x="34.31" y="209.36" width="0.73" height="0.91" fill="#ffd700"/><rect x="5.84" y="210.83" width="2.19" height="0.91" fill="#9cdcfe"/><rect x="8.76" y="210.83" width="0.73" height="0.91" fill="#d4d4d4"/><rect x="10.22" y="210.83" width="2.19" height="0.91" fill="#9cdcfe"/><rect x="12.41" y="210.83" width="0.73" height="0.91" fill="#ffd700"/><rect x="13.14" y="210.83" width="0.73" height="0.91" fill="#d4d4d4"/><rect x="13.87" y="210.83" width="2.19" height="0.91" fill="#dcdcaa"/><rect x="16.06" y="210.83" width="0.73" height="0.91" fill="#ffd700"/><rect x="16.79" y="210.83" width="2.19" height="0.91" fill="#9cdcfe"/><rect x="18.98" y="210.83" width="0.73" height="0.91" fill="#ffd700"/><rect x="19.71" y="210.83" width="0.73" height="0.91" fill="#d4d4d4"/><rect x="20.44" y="210.83" width="0.73" height="0.91" fill="#b5cea8"/><rect x="21.17" y="210.83" width="0.73" height="0.91" fill="#ffd700"/><rect x="2.92" y="212.30" width="0.73" height="0.91" fill="#ffd700"/><rect x="2.92" y="213.77" width="0.73" height="0.91" fill="#9cdcfe"/><rect x="4.38" y="213.77" width="1.46" height="0.91" fill="#d4d4d4"/><rect x="6.57" y="213.77" width="6.57" height="0.91" fill="#dcdcaa"/><rect x="13.14" y="213.77" width="0.73" height="0.91" fill="#ffd700"/><rect x="13.87" y="213.77" width="2.92" height="0.91" fill="#9cdcfe"/><rect x="16.79" y="213.77" width="0.73" height="0.91" fill="#d4d4d4"/><rect x="17.52" y="213.77" width="2.19" height="0.91" fill="#dcdcaa"/><rect x="19.71" y="213.77" width="1.46" height="0.91" fill="#ffd700"/><rect x="21.17" y="213.77" width="0.73" height="0.91" fill="#d4d4d4"/><rect x="22.63" y="213.77" width="3.65" height="0.91" fill="#9cdcfe"/><rect x="26.28" y="213.77" width="0.73" height="0.91" fill="#d4d4d4"/><rect x="27.74" y="213.77" width="4.38" height="0.91" fill="#dcdcaa"/><rect x="32.12" y="213.77" width="0.73" height="0.91" fill="#ffd700"/><rect x="32.85" y="213.77" width="2.19" height="0.91" fill="#9cdcfe"/><rect x="35.04" y="213.77" width="0.73" height="0.91" fill="#ffd700"/><rect x="35.77" y="213.77" width="0.73" height="0.91" fill="#d4d4d4"/><rect x="37.23" y="213.77" width="1.46" height="0.91" fill="#9cdcfe"/><rect x="38.69" y="213.77" width="0.73" height="0.91" fill="#ffd700"/><rect x="2.92" y="215.24" width="4.38" height="0.91" fill="#c586c0"/><rect x="8.03" y="215.24" width="5.11" height="0.91" fill="#9cdcfe"/><rect x="13.14" y="215.24" width="0.73" height="0.91" fill="#d4d4d4"/><rect x="14.60" y="215.24" width="0.73" height="0.91" fill="#9cdcfe"/><rect x="15.33" y="215.24" width="0.73" height="0.91" fill="#d4d4d4"/><rect x="16.06" y="215.24" width="0.73" height="0.91" fill="#9cdcfe"/><rect x="16.79" y="215.24" width="0.73" height="0.91" fill="#d4d4d4"/><rect x="17.52" y="215.24" width="4.38" height="0.91" fill="#dcdcaa"/><rect x="21.90" y="215.24" width="0.73" height="0.91" fill="#ffd700"/><rect x="22.63" y="215.24" width="5.11" height="0.91" fill="#9cdcfe"/><rect x="27.74" y="215.24" width="0.73" height="0.91" fill="#d4d4d4"/><rect x="28.47" y="215.24" width="7.30" height="0.91" fill="#dcdcaa"/><rect x="35.77" y="215.24" width="1.46" height="0.91" fill="#ffd700"/><rect x="37.23" y="215.24" width="0.73" height="0.91" fill="#d4d4d4"/><rect x="38.69" y="215.24" width="0.73" height="0.91" fill="#9cdcfe"/><rect x="39.42" y="215.24" width="0.73" height="0.91" fill="#ffd700"/><rect x="0.00" y="216.71" width="0.73" height="0.91" fill="#ffd700"/><rect x="0.00" y="219.65" width="1.46" height="0.91" fill="#6a9955"/><rect x="2.19" y="219.65" width="0.73" height="0.91" fill="#6a9955"/><rect x="3.65" y="219.65" width="4.38" height="0.91" fill="#6a9955"/><rect x="8.76" y="219.65" width="5.11" height="0.91" fill="#6a9955"/><rect x="14.60" y="219.65" width="7.30" height="0.91" fill="#6a9955"/><rect x="22.63" y="219.65" width="8.03" height="0.91" fill="#6a9955"/><rect x="31.39" y="219.65" width="3.65" height="0.91" fill="#6a9955"/><rect x="35.77" y="219.65" width="2.92" height="0.91" fill="#6a9955"/><rect x="39.42" y="219.65" width="2.92" height="0.91" fill="#6a9955"/><rect x="43.07" y="219.65" width="1.46" height="0.91" fill="#6a9955"/><rect x="45.26" y="219.65" width="1.24" height="0.91" fill="#6a9955"/><rect x="0.00" y="221.12" width="1.46" height="0.91" fill="#6a9955"/><rect x="2.19" y="221.12" width="2.92" height="0.91" fill="#6a9955"/><rect x="5.84" y="221.12" width="4.38" height="0.91" fill="#6a9955"/><rect x="10.95" y="221.12" width="3.65" height="0.91" fill="#6a9955"/><rect x="15.33" y="221.12" width="3.65" height="0.91" fill="#6a9955"/><rect x="19.71" y="221.12" width="2.19" height="0.91" fill="#6a9955"/><rect x="22.63" y="221.12" width="3.65" height="0.91" fill="#6a9955"/><rect x="27.01" y="221.12" width="5.84" height="0.91" fill="#6a9955"/><rect x="0.00" y="222.59" width="1.46" height="0.91" fill="#6a9955"/><rect x="2.19" y="222.59" width="2.19" height="0.91" fill="#6a9955"/><rect x="5.11" y="222.59" width="2.92" height="0.91" fill="#6a9955"/><rect x="8.76" y="222.59" width="3.65" height="0.91" fill="#6a9955"/><rect x="13.14" y="222.59" width="1.46" height="0.91" fill="#6a9955"/><rect x="15.33" y="222.59" width="5.11" height="0.91" fill="#6a9955"/><rect x="21.17" y="222.59" width="0.73" height="0.91" fill="#6a9955"/><rect x="22.63" y="222.59" width="5.84" height="0.91" fill="#6a9955"/><rect x="29.20" y="222.59" width="2.19" height="0.91" fill="#6a9955"/><rect x="32.12" y="222.59" width="4.38" height="0.91" fill="#6a9955"/><rect x="37.23" y="222.59" width="1.46" height="0.91" fill="#6a9955"/><rect x="39.42" y="222.59" width="1.46" height="0.91" fill="#6a9955"/><rect x="41.61" y="222.59" width="0.73" height="0.91" fill="#6a9955"/><rect x="43.07" y="222.59" width="3.43" height="0.91" fill="#6a9955"/><rect x="0.00" y="224.06" width="1.46" height="0.91" fill="#6a9955"/><rect x="0.00" y="225.53" width="1.46" height="0.91" fill="#6a9955"/><rect x="2.19" y="225.53" width="1.46" height="0.91" fill="#6a9955"/><rect x="4.38" y="225.53" width="4.38" height="0.91" fill="#6a9955"/><rect x="9.49" y="225.53" width="0.73" height="0.91" fill="#6a9955"/><rect x="10.95" y="225.53" width="2.19" height="0.91" fill="#6a9955"/><rect x="13.87" y="225.53" width="5.11" height="0.91" fill="#6a9955"/><rect x="19.71" y="225.53" width="2.92" height="0.91" fill="#6a9955"/><rect x="23.36" y="225.53" width="3.65" height="0.91" fill="#6a9955"/><rect x="27.74" y="225.53" width="1.46" height="0.91" fill="#6a9955"/><rect x="29.93" y="225.53" width="0.73" height="0.91" fill="#6a9955"/><rect x="31.39" y="225.53" width="4.38" height="0.91" fill="#6a9955"/><rect x="36.50" y="225.53" width="4.38" height="0.91" fill="#6a9955"/><rect x="0.00" y="227.00" width="1.46" height="0.91" fill="#6a9955"/><rect x="2.19" y="227.00" width="2.92" height="0.91" fill="#6a9955"/><rect x="5.84" y="227.00" width="4.38" height="0.91" fill="#6a9955"/><rect x="10.95" y="227.00" width="5.11" height="0.91" fill="#6a9955"/><rect x="0.00" y="228.47" width="2.92" height="0.91" fill="#569cd6"/><rect x="3.65" y="228.47" width="4.38" height="0.91" fill="#4ec9b0"/><rect x="8.76" y="228.47" width="4.38" height="0.91" fill="#569cd6"/><rect x="13.87" y="228.47" width="0.73" height="0.91" fill="#ffd700"/><rect x="2.92" y="229.94" width="5.11" height="0.91" fill="#9cdcfe"/><rect x="8.76" y="229.94" width="5.11" height="0.91" fill="#4ec9b0"/><rect x="14.60" y="229.94" width="1.46" height="0.91" fill="#6a9955"/><rect x="16.79" y="229.94" width="2.19" height="0.91" fill="#6a9955"/><rect x="19.71" y="229.94" width="7.30" height="0.91" fill="#6a9955"/><rect x="27.74" y="229.94" width="5.11" height="0.91" fill="#6a9955"/><rect x="0.00" y="231.41" width="0.73" height="0.91" fill="#ffd700"/><rect x="0.00" y="234.35" width="2.92" height="0.91" fill="#569cd6"/><rect x="3.65" y="234.35" width="0.73" height="0.91" fill="#ffd700"/><rect x="4.38" y="234.35" width="0.73" height="0.91" fill="#9cdcfe"/><rect x="5.84" y="234.35" width="0.73" height="0.91" fill="#d4d4d4"/><rect x="6.57" y="234.35" width="4.38" height="0.91" fill="#4ec9b0"/><rect x="10.95" y="234.35" width="0.73" height="0.91" fill="#ffd700"/><rect x="12.41" y="234.35" width="3.65" height="0.91" fill="#dcdcaa"/><rect x="16.06" y="234.35" width="1.46" height="0.91" fill="#ffd700"/><rect x="18.25" y="234.35" width="0.73" height="0.91" fill="#d4d4d4"/><rect x="18.98" y="234.35" width="4.38" height="0.91" fill="#4ec9b0"/><rect x="24.09" y="234.35" width="0.73" height="0.91" fill="#ffd700"/><rect x="2.92" y="235.82" width="0.73" height="0.91" fill="#9cdcfe"/><rect x="4.38" y="235.82" width="1.46" height="0.91" fill="#d4d4d4"/><rect x="6.57" y="235.82" width="0.73" height="0.91" fill="#d4d4d4"/><rect x="7.30" y="235.82" width="0.73" height="0.91" fill="#9cdcfe"/><rect x="2.92" y="237.29" width="4.38" height="0.91" fill="#c586c0"/><rect x="8.03" y="237.29" width="0.73" height="0.91" fill="#d4d4d4"/><rect x="8.76" y="237.29" width="0.73" height="0.91" fill="#9cdcfe"/><rect x="0.00" y="238.76" width="0.73" height="0.91" fill="#ffd700"/><rect x="0.00" y="241.70" width="1.46" height="0.91" fill="#6a9955"/><rect x="2.19" y="241.70" width="5.11" height="0.91" fill="#6a9955"/><rect x="8.03" y="241.70" width="5.11" height="0.91" fill="#6a9955"/><rect x="13.87" y="241.70" width="2.19" height="0.91" fill="#6a9955"/><rect x="16.79" y="241.70" width="5.84" height="0.91" fill="#6a9955"/><rect x="0.00" y="243.17" width="2.92" height="0.91" fill="#569cd6"/><rect x="3.65" y="243.17" width="0.73" height="0.91" fill="#ffd700"/><rect x="4.38" y="243.17" width="0.73" height="0.91" fill="#9cdcfe"/><rect x="5.84" y="243.17" width="0.73" height="0.91" fill="#d4d4d4"/><rect x="6.57" y="243.17" width="4.38" height="0.91" fill="#4ec9b0"/><rect x="10.95" y="243.17" width="0.73" height="0.91" fill="#ffd700"/><rect x="12.41" y="243.17" width="5.11" height="0.91" fill="#dcdcaa"/><rect x="17.52" y="243.17" width="1.46" height="0.91" fill="#ffd700"/><rect x="19.71" y="243.17" width="5.11" height="0.91" fill="#4ec9b0"/><rect x="25.55" y="243.17" width="0.73" height="0.91" fill="#ffd700"/><rect x="27.01" y="243.17" width="4.38" height="0.91" fill="#c586c0"/><rect x="32.12" y="243.17" width="0.73" height="0.91" fill="#9cdcfe"/><rect x="32.85" y="243.17" width="0.73" height="0.91" fill="#d4d4d4"/><rect x="33.58" y="243.17" width="5.11" height="0.91" fill="#9cdcfe"/><rect x="39.42" y="243.17" width="0.73" height="0.91" fill="#ffd700"/><rect x="0.00" y="246.11" width="1.46" height="0.91" fill="#6a9955"/><rect x="2.19" y="246.11" width="2.92" height="0.91" fill="#6a9955"/><rect x="5.84" y="246.11" width="5.11" height="0.91" fill="#6a9955"/><rect x="11.68" y="246.11" width="0.73" height="0.91" fill="#6a9955"/><rect x="13.14" y="246.11" width="4.38" height="0.91" fill="#6a9955"/><rect x="18.25" y="246.11" width="2.92" height="0.91" fill="#6a9955"/><rect x="21.90" y="246.11" width="5.84" height="0.91" fill="#6a9955"/><rect x="28.47" y="246.11" width="2.19" height="0.91" fill="#6a9955"/><rect x="31.39" y="246.11" width="3.65" height="0.91" fill="#6a9955"/><rect x="35.77" y="246.11" width="7.30" height="0.91" fill="#6a9955"/><rect x="0.00" y="247.58" width="1.46" height="0.91" fill="#6a9955"/><rect x="2.19" y="247.58" width="1.46" height="0.91" fill="#6a9955"/><rect x="4.38" y="247.58" width="2.92" height="0.91" fill="#6a9955"/><rect x="8.03" y="247.58" width="4.38" height="0.91" fill="#6a9955"/><rect x="13.14" y="247.58" width="7.30" height="0.91" fill="#6a9955"/><rect x="21.17" y="247.58" width="6.57" height="0.91" fill="#6a9955"/><rect x="28.47" y="247.58" width="2.19" height="0.91" fill="#6a9955"/><rect x="31.39" y="247.58" width="6.57" height="0.91" fill="#6a9955"/><rect x="38.69" y="247.58" width="1.46" height="0.91" fill="#6a9955"/><rect x="0.00" y="249.05" width="1.46" height="0.91" fill="#6a9955"/><rect x="2.19" y="249.05" width="7.30" height="0.91" fill="#6a9955"/><rect x="10.22" y="249.05" width="1.46" height="0.91" fill="#6a9955"/><rect x="12.41" y="249.05" width="1.46" height="0.91" fill="#6a9955"/><rect x="14.60" y="249.05" width="1.46" height="0.91" fill="#6a9955"/><rect x="16.79" y="249.05" width="9.49" height="0.91" fill="#6a9955"/><rect x="0.00" y="250.52" width="2.92" height="0.91" fill="#569cd6"/><rect x="3.65" y="250.52" width="0.73" height="0.91" fill="#ffd700"/><rect x="4.38" y="250.52" width="0.73" height="0.91" fill="#9cdcfe"/><rect x="5.84" y="250.52" width="0.73" height="0.91" fill="#d4d4d4"/><rect x="6.57" y="250.52" width="4.38" height="0.91" fill="#4ec9b0"/><rect x="10.95" y="250.52" width="0.73" height="0.91" fill="#ffd700"/><rect x="12.41" y="250.52" width="2.92" height="0.91" fill="#dcdcaa"/><rect x="15.33" y="250.52" width="0.73" height="0.91" fill="#ffd700"/><rect x="16.06" y="250.52" width="2.92" height="0.91" fill="#9cdcfe"/><rect x="19.71" y="250.52" width="2.19" height="0.91" fill="#d4d4d4"/><rect x="21.90" y="250.52" width="2.19" height="0.91" fill="#4ec9b0"/><rect x="24.09" y="250.52" width="0.73" height="0.91" fill="#ffd700"/><rect x="25.55" y="250.52" width="0.73" height="0.91" fill="#d4d4d4"/><rect x="26.28" y="250.52" width="4.38" height="0.91" fill="#4ec9b0"/><rect x="31.39" y="250.52" width="0.73" height="0.91" fill="#ffd700"/><rect x="2.92" y="251.99" width="1.46" height="0.91" fill="#c586c0"/><rect x="5.11" y="251.99" width="2.19" height="0.91" fill="#dcdcaa"/><rect x="7.30" y="251.99" width="0.73" height="0.91" fill="#ffd700"/><rect x="8.03" y="251.99" width="2.92" height="0.91" fill="#9cdcfe"/><rect x="10.95" y="251.99" width="0.73" height="0.91" fill="#ffd700"/><rect x="12.41" y="251.99" width="1.46" height="0.91" fill="#d4d4d4"/><rect x="14.60" y="251.99" width="0.73" height="0.91" fill="#b5cea8"/><rect x="16.06" y="251.99" width="0.73" height="0.91" fill="#ffd700"/><rect x="5.84" y="253.46" width="4.38" height="0.91" fill="#c586c0"/><rect x="10.95" y="253.46" width="0.73" height="0.91" fill="#9cdcfe"/><rect x="2.92" y="254.93" width="0.73" height="0.91" fill="#ffd700"/><rect x="2.92" y="256.40" width="0.73" height="0.91" fill="#9cdcfe"/><rect x="4.38" y="256.40" width="1.46" height="0.91" fill="#d4d4d4"/><rect x="6.57" y="256.40" width="0.73" height="0.91" fill="#9cdcfe"/><rect x="7.30" y="256.40" width="0.73" height="0.91" fill="#d4d4d4"/><rect x="8.03" y="256.40" width="3.65" height="0.91" fill="#dcdcaa"/><rect x="11.68" y="256.40" width="1.46" height="0.91" fill="#ffd700"/><rect x="2.92" y="257.87" width="0.73" height="0.91" fill="#9cdcfe"/><rect x="3.65" y="257.87" width="0.73" height="0.91" fill="#d4d4d4"/><rect x="4.38" y="257.87" width="5.11" height="0.91" fill="#9cdcfe"/><rect x="10.22" y="257.87" width="0.73" height="0.91" fill="#d4d4d4"/><rect x="11.68" y="257.87" width="0.73" height="0.91" fill="#9cdcfe"/><rect x="12.41" y="257.87" width="0.73" height="0.91" fill="#d4d4d4"/><rect x="13.14" y="257.87" width="5.11" height="0.91" fill="#9cdcfe"/><rect x="18.25" y="257.87" width="0.73" height="0.91" fill="#d4d4d4"/><rect x="18.98" y="257.87" width="6.57" height="0.91" fill="#dcdcaa"/><rect x="25.55" y="257.87" width="0.73" height="0.91" fill="#ffd700"/><rect x="26.28" y="257.87" width="10.95" height="0.91" fill="#dcdcaa"/><rect x="37.23" y="257.87" width="0.73" height="0.91" fill="#ffd700"/><rect x="37.96" y="257.87" width="2.92" height="0.91" fill="#9cdcfe"/><rect x="40.88" y="257.87" width="1.46" height="0.91" fill="#ffd700"/><rect x="2.92" y="259.34" width="4.38" height="0.91" fill="#c586c0"/><rect x="8.03" y="259.34" width="0.73" height="0.91" fill="#9cdcfe"/><rect x="0.00" y="260.81" width="0.73" height="0.91" fill="#ffd700"/><rect x="0.00" y="263.75" width="1.46" height="0.91" fill="#6a9955"/><rect x="2.19" y="263.75" width="6.57" height="0.91" fill="#6a9955"/><rect x="9.49" y="263.75" width="5.11" height="0.91" fill="#6a9955"/><rect x="15.33" y="263.75" width="0.73" height="0.91" fill="#6a9955"/><rect x="16.79" y="263.75" width="4.38" height="0.91" fill="#6a9955"/><rect x="21.90" y="263.75" width="2.92" height="0.91" fill="#6a9955"/><rect x="25.55" y="263.75" width="4.38" height="0.91" fill="#6a9955"/><rect x="30.66" y="263.75" width="0.73" height="0.91" fill="#6a9955"/><rect x="32.12" y="263.75" width="4.38" height="0.91" fill="#6a9955"/><rect x="37.23" y="263.75" width="1.46" height="0.91" fill="#6a9955"/><rect x="39.42" y="263.75" width="2.92" height="0.91" fill="#6a9955"/><rect x="43.07" y="263.75" width="1.46" height="0.91" fill="#6a9955"/><rect x="45.26" y="263.75" width="1.24" height="0.91" fill="#6a9955"/><rect x="0.00" y="265.22" width="1.46" height="0.91" fill="#6a9955"/><rect x="2.19" y="265.22" width="2.19" height="0.91" fill="#6a9955"/><rect x="5.11" y="265.22" width="2.92" height="0.91" fill="#6a9955"/><rect x="8.76" y="265.22" width="1.46" height="0.91" fill="#6a9955"/><rect x="10.95" y="265.22" width="2.19" height="0.91" fill="#6a9955"/><rect x="13.87" y="265.22" width="7.30" height="0.91" fill="#6a9955"/><rect x="21.90" y="265.22" width="3.65" height="0.91" fill="#6a9955"/><rect x="26.28" y="265.22" width="1.46" height="0.91" fill="#6a9955"/><rect x="28.47" y="265.22" width="2.19" height="0.91" fill="#6a9955"/><rect x="31.39" y="265.22" width="4.38" height="0.91" fill="#6a9955"/><rect x="36.50" y="265.22" width="2.92" height="0.91" fill="#6a9955"/><rect x="40.15" y="265.22" width="1.46" height="0.91" fill="#6a9955"/><rect x="42.34" y="265.22" width="4.16" height="0.91" fill="#6a9955"/><rect x="0.00" y="266.69" width="1.46" height="0.91" fill="#6a9955"/><rect x="2.19" y="266.69" width="3.65" height="0.91" fill="#6a9955"/><rect x="6.57" y="266.69" width="2.92" height="0.91" fill="#6a9955"/><rect x="10.22" y="266.69" width="2.92" height="0.91" fill="#6a9955"/><rect x="13.87" y="266.69" width="9.49" height="0.91" fill="#6a9955"/><rect x="24.09" y="266.69" width="5.11" height="0.91" fill="#6a9955"/><rect x="29.93" y="266.69" width="5.11" height="0.91" fill="#6a9955"/><rect x="35.77" y="266.69" width="1.46" height="0.91" fill="#6a9955"/><rect x="37.96" y="266.69" width="2.19" height="0.91" fill="#6a9955"/><rect x="40.88" y="266.69" width="5.62" height="0.91" fill="#6a9955"/><rect x="0.00" y="268.16" width="1.46" height="0.91" fill="#6a9955"/><rect x="2.19" y="268.16" width="4.38" height="0.91" fill="#6a9955"/><rect x="7.30" y="268.16" width="1.46" height="0.91" fill="#6a9955"/><rect x="9.49" y="268.16" width="2.19" height="0.91" fill="#6a9955"/><rect x="12.41" y="268.16" width="5.84" height="0.91" fill="#6a9955"/><rect x="18.98" y="268.16" width="6.57" height="0.91" fill="#6a9955"/><rect x="0.00" y="269.63" width="1.46" height="0.91" fill="#6a9955"/><rect x="0.00" y="271.10" width="1.46" height="0.91" fill="#6a9955"/><rect x="2.19" y="271.10" width="1.46" height="0.91" fill="#6a9955"/><rect x="4.38" y="271.10" width="2.92" height="0.91" fill="#6a9955"/><rect x="8.03" y="271.10" width="1.46" height="0.91" fill="#6a9955"/><rect x="10.22" y="271.10" width="4.38" height="0.91" fill="#6a9955"/><rect x="15.33" y="271.10" width="6.57" height="0.91" fill="#6a9955"/><rect x="22.63" y="271.10" width="5.11" height="0.91" fill="#6a9955"/><rect x="28.47" y="271.10" width="2.19" height="0.91" fill="#6a9955"/><rect x="31.39" y="271.10" width="6.57" height="0.91" fill="#6a9955"/><rect x="0.00" y="272.57" width="2.92" height="0.91" fill="#569cd6"/><rect x="3.65" y="272.57" width="0.73" height="0.91" fill="#ffd700"/><rect x="4.38" y="272.57" width="0.73" height="0.91" fill="#9cdcfe"/><rect x="5.84" y="272.57" width="0.73" height="0.91" fill="#d4d4d4"/><rect x="6.57" y="272.57" width="4.38" height="0.91" fill="#4ec9b0"/><rect x="10.95" y="272.57" width="0.73" height="0.91" fill="#ffd700"/><rect x="12.41" y="272.57" width="6.57" height="0.91" fill="#dcdcaa"/><rect x="18.98" y="272.57" width="0.73" height="0.91" fill="#ffd700"/><rect x="19.71" y="272.57" width="2.92" height="0.91" fill="#9cdcfe"/><rect x="23.36" y="272.57" width="4.38" height="0.91" fill="#4ec9b0"/><rect x="27.74" y="272.57" width="0.73" height="0.91" fill="#ffd700"/><rect x="29.20" y="272.57" width="0.73" height="0.91" fill="#d4d4d4"/><rect x="29.93" y="272.57" width="4.38" height="0.91" fill="#4ec9b0"/><rect x="35.04" y="272.57" width="0.73" height="0.91" fill="#ffd700"/><rect x="2.92" y="274.04" width="1.46" height="0.91" fill="#c586c0"/><rect x="5.11" y="274.04" width="2.92" height="0.91" fill="#9cdcfe"/><rect x="8.76" y="274.04" width="1.46" height="0.91" fill="#d4d4d4"/><rect x="10.95" y="274.04" width="1.46" height="0.91" fill="#ce9178"/><rect x="13.14" y="274.04" width="0.73" height="0.91" fill="#ffd700"/><rect x="5.84" y="275.51" width="4.38" height="0.91" fill="#c586c0"/><rect x="10.95" y="275.51" width="0.73" height="0.91" fill="#9cdcfe"/><rect x="2.92" y="276.98" width="0.73" height="0.91" fill="#ffd700"/><rect x="2.92" y="278.45" width="0.73" height="0.91" fill="#9cdcfe"/><rect x="4.38" y="278.45" width="1.46" height="0.91" fill="#d4d4d4"/><rect x="6.57" y="278.45" width="0.73" height="0.91" fill="#9cdcfe"/><rect x="7.30" y="278.45" width="0.73" height="0.91" fill="#d4d4d4"/><rect x="8.03" y="278.45" width="3.65" height="0.91" fill="#dcdcaa"/><rect x="11.68" y="278.45" width="1.46" height="0.91" fill="#ffd700"/><rect x="2.92" y="279.92" width="0.73" height="0.91" fill="#9cdcfe"/><rect x="3.65" y="279.92" width="0.73" height="0.91" fill="#d4d4d4"/><rect x="4.38" y="279.92" width="5.11" height="0.91" fill="#9cdcfe"/><rect x="10.22" y="279.92" width="0.73" height="0.91" fill="#d4d4d4"/><rect x="11.68" y="279.92" width="0.73" height="0.91" fill="#9cdcfe"/><rect x="12.41" y="279.92" width="0.73" height="0.91" fill="#d4d4d4"/><rect x="13.14" y="279.92" width="5.11" height="0.91" fill="#9cdcfe"/><rect x="18.25" y="279.92" width="0.73" height="0.91" fill="#d4d4d4"/><rect x="18.98" y="279.92" width="6.57" height="0.91" fill="#dcdcaa"/><rect x="25.55" y="279.92" width="0.73" height="0.91" fill="#ffd700"/><rect x="26.28" y="279.92" width="2.92" height="0.91" fill="#9cdcfe"/><rect x="29.20" y="279.92" width="0.73" height="0.91" fill="#ffd700"/><rect x="2.92" y="281.39" width="4.38" height="0.91" fill="#c586c0"/><rect x="8.03" y="281.39" width="0.73" height="0.91" fill="#9cdcfe"/><rect x="0.00" y="282.86" width="0.73" height="0.91" fill="#ffd700"/><rect x="0.00" y="285.80" width="1.46" height="0.91" fill="#6a9955"/><rect x="2.19" y="285.80" width="2.19" height="0.91" fill="#6a9955"/><rect x="5.11" y="285.80" width="5.11" height="0.91" fill="#6a9955"/><rect x="10.95" y="285.80" width="0.73" height="0.91" fill="#6a9955"/><rect x="12.41" y="285.80" width="2.19" height="0.91" fill="#6a9955"/><rect x="15.33" y="285.80" width="4.38" height="0.91" fill="#6a9955"/><rect x="20.44" y="285.80" width="2.92" height="0.91" fill="#6a9955"/><rect x="24.09" y="285.80" width="2.19" height="0.91" fill="#6a9955"/><rect x="27.01" y="285.80" width="3.65" height="0.91" fill="#6a9955"/><rect x="31.39" y="285.80" width="5.11" height="0.91" fill="#6a9955"/><rect x="37.23" y="285.80" width="5.84" height="0.91" fill="#6a9955"/><rect x="0.00" y="287.27" width="2.92" height="0.91" fill="#569cd6"/><rect x="3.65" y="287.27" width="2.19" height="0.91" fill="#dcdcaa"/><rect x="5.84" y="287.27" width="0.73" height="0.91" fill="#ffd700"/><rect x="6.57" y="287.27" width="0.73" height="0.91" fill="#9cdcfe"/><rect x="8.03" y="287.27" width="5.11" height="0.91" fill="#4ec9b0"/><rect x="13.14" y="287.27" width="0.73" height="0.91" fill="#ffd700"/><rect x="14.60" y="287.27" width="0.73" height="0.91" fill="#d4d4d4"/><rect x="15.33" y="287.27" width="4.38" height="0.91" fill="#4ec9b0"/><rect x="20.44" y="287.27" width="0.73" height="0.91" fill="#ffd700"/><rect x="2.92" y="288.74" width="1.46" height="0.91" fill="#c586c0"/><rect x="5.11" y="288.74" width="0.73" height="0.91" fill="#9cdcfe"/><rect x="6.57" y="288.74" width="1.46" height="0.91" fill="#d4d4d4"/><rect x="8.76" y="288.74" width="2.19" height="0.91" fill="#569cd6"/><rect x="11.68" y="288.74" width="0.73" height="0.91" fill="#ffd700"/><rect x="5.84" y="290.21" width="3.65" height="0.91" fill="#dcdcaa"/><rect x="9.49" y="290.21" width="0.73" height="0.91" fill="#ffd700"/><rect x="10.22" y="290.21" width="9.49" height="0.91" fill="#ce9178"/><rect x="19.71" y="290.21" width="0.73" height="0.91" fill="#ffd700"/><rect x="2.92" y="291.68" width="0.73" height="0.91" fill="#ffd700"/><rect x="2.92" y="293.15" width="4.38" height="0.91" fill="#c586c0"/><rect x="8.03" y="293.15" width="0.73" height="0.91" fill="#d4d4d4"/><rect x="8.76" y="293.15" width="4.38" height="0.91" fill="#4ec9b0"/><rect x="13.14" y="293.15" width="0.73" height="0.91" fill="#ffd700"/><rect x="13.87" y="293.15" width="5.11" height="0.91" fill="#9cdcfe"/><rect x="18.98" y="293.15" width="0.73" height="0.91" fill="#d4d4d4"/><rect x="20.44" y="293.15" width="0.73" height="0.91" fill="#9cdcfe"/><rect x="21.17" y="293.15" width="0.73" height="0.91" fill="#ffd700"/><rect x="0.00" y="294.62" width="0.73" height="0.91" fill="#ffd700"/><rect x="0.00" y="297.56" width="1.46" height="0.91" fill="#6a9955"/><rect x="2.19" y="297.56" width="2.92" height="0.91" fill="#6a9955"/><rect x="5.84" y="297.56" width="3.65" height="0.91" fill="#6a9955"/><rect x="10.22" y="297.56" width="9.49" height="0.91" fill="#6a9955"/><rect x="20.44" y="297.56" width="1.46" height="0.91" fill="#6a9955"/><rect x="22.63" y="297.56" width="2.19" height="0.91" fill="#6a9955"/><rect x="25.55" y="297.56" width="5.11" height="0.91" fill="#6a9955"/><rect x="31.39" y="297.56" width="5.11" height="0.91" fill="#6a9955"/><rect x="0.00" y="299.03" width="2.92" height="0.91" fill="#569cd6"/><rect x="3.65" y="299.03" width="2.92" height="0.91" fill="#dcdcaa"/><rect x="6.57" y="299.03" width="0.73" height="0.91" fill="#ffd700"/><rect x="7.30" y="299.03" width="2.92" height="0.91" fill="#9cdcfe"/><rect x="10.95" y="299.03" width="2.19" height="0.91" fill="#d4d4d4"/><rect x="13.14" y="299.03" width="2.19" height="0.91" fill="#4ec9b0"/><rect x="15.33" y="299.03" width="0.73" height="0.91" fill="#ffd700"/><rect x="16.79" y="299.03" width="0.73" height="0.91" fill="#d4d4d4"/><rect x="17.52" y="299.03" width="4.38" height="0.91" fill="#4ec9b0"/><rect x="22.63" y="299.03" width="0.73" height="0.91" fill="#ffd700"/><rect x="2.92" y="300.50" width="4.38" height="0.91" fill="#c586c0"/><rect x="8.03" y="300.50" width="5.11" height="0.91" fill="#dcdcaa"/><rect x="13.14" y="300.50" width="1.46" height="0.91" fill="#ffd700"/><rect x="14.60" y="300.50" width="0.73" height="0.91" fill="#d4d4d4"/><rect x="15.33" y="300.50" width="2.92" height="0.91" fill="#dcdcaa"/><rect x="18.25" y="300.50" width="0.73" height="0.91" fill="#ffd700"/><rect x="18.98" y="300.50" width="2.92" height="0.91" fill="#9cdcfe"/><rect x="21.90" y="300.50" width="2.19" height="0.91" fill="#d4d4d4"/><rect x="24.09" y="300.50" width="0.73" height="0.91" fill="#ffd700"/><rect x="0.00" y="301.97" width="0.73" height="0.91" fill="#ffd700"/><rect x="0.00" y="304.91" width="1.46" height="0.91" fill="#6a9955"/><rect x="2.19" y="304.91" width="5.11" height="0.91" fill="#6a9955"/><rect x="8.03" y="304.91" width="5.11" height="0.91" fill="#6a9955"/><rect x="13.87" y="304.91" width="5.11" height="0.91" fill="#6a9955"/><rect x="19.71" y="304.91" width="0.73" height="0.91" fill="#6a9955"/><rect x="21.17" y="304.91" width="3.65" height="0.91" fill="#6a9955"/><rect x="25.55" y="304.91" width="2.19" height="0.91" fill="#6a9955"/><rect x="28.47" y="304.91" width="5.11" height="0.91" fill="#6a9955"/><rect x="34.31" y="304.91" width="1.46" height="0.91" fill="#6a9955"/><rect x="36.50" y="304.91" width="2.19" height="0.91" fill="#6a9955"/><rect x="39.42" y="304.91" width="3.65" height="0.91" fill="#6a9955"/><rect x="43.80" y="304.91" width="2.70" height="0.91" fill="#6a9955"/><rect x="0.00" y="306.38" width="2.92" height="0.91" fill="#569cd6"/><rect x="3.65" y="306.38" width="0.73" height="0.91" fill="#ffd700"/><rect x="4.38" y="306.38" width="0.73" height="0.91" fill="#9cdcfe"/><rect x="5.84" y="306.38" width="0.73" height="0.91" fill="#d4d4d4"/><rect x="6.57" y="306.38" width="4.38" height="0.91" fill="#4ec9b0"/><rect x="10.95" y="306.38" width="0.73" height="0.91" fill="#ffd700"/><rect x="12.41" y="306.38" width="5.11" height="0.91" fill="#dcdcaa"/><rect x="17.52" y="306.38" width="0.73" height="0.91" fill="#ffd700"/><rect x="18.25" y="306.38" width="2.19" height="0.91" fill="#9cdcfe"/><rect x="21.17" y="306.38" width="5.11" height="0.91" fill="#9cdcfe"/><rect x="26.28" y="306.38" width="0.73" height="0.91" fill="#d4d4d4"/><rect x="27.01" y="306.38" width="5.11" height="0.91" fill="#4ec9b0"/><rect x="32.12" y="306.38" width="0.73" height="0.91" fill="#d4d4d4"/><rect x="33.58" y="306.38" width="3.65" height="0.91" fill="#9cdcfe"/><rect x="37.96" y="306.38" width="3.65" height="0.91" fill="#4ec9b0"/><rect x="41.61" y="306.38" width="0.73" height="0.91" fill="#ffd700"/><rect x="43.07" y="306.38" width="2.92" height="0.91" fill="#4ec9b0"/><rect x="2.92" y="307.85" width="1.46" height="0.91" fill="#c586c0"/><rect x="5.11" y="307.85" width="2.19" height="0.91" fill="#9cdcfe"/><rect x="8.03" y="307.85" width="1.46" height="0.91" fill="#d4d4d4"/><rect x="10.22" y="307.85" width="2.19" height="0.91" fill="#569cd6"/><rect x="13.14" y="307.85" width="0.73" height="0.91" fill="#ffd700"/><rect x="5.84" y="309.32" width="2.19" height="0.91" fill="#9cdcfe"/><rect x="8.76" y="309.32" width="0.73" height="0.91" fill="#d4d4d4"/><rect x="10.22" y="309.32" width="5.11" height="0.91" fill="#9cdcfe"/><rect x="15.33" y="309.32" width="0.73" height="0.91" fill="#d4d4d4"/><rect x="16.06" y="309.32" width="7.30" height="0.91" fill="#dcdcaa"/><rect x="23.36" y="309.32" width="1.46" height="0.91" fill="#ffd700"/><rect x="2.92" y="310.79" width="0.73" height="0.91" fill="#ffd700"/><rect x="2.92" y="312.26" width="4.38" height="0.91" fill="#c586c0"/><rect x="8.03" y="312.26" width="0.73" height="0.91" fill="#9cdcfe"/><rect x="8.76" y="312.26" width="0.73" height="0.91" fill="#d4d4d4"/><rect x="9.49" y="312.26" width="5.11" height="0.91" fill="#dcdcaa"/><rect x="14.60" y="312.26" width="1.46" height="0.91" fill="#ffd700"/><rect x="16.06" y="312.26" width="0.73" height="0.91" fill="#d4d4d4"/><rect x="16.79" y="312.26" width="5.11" height="0.91" fill="#dcdcaa"/><rect x="21.90" y="312.26" width="0.73" height="0.91" fill="#ffd700"/><rect x="22.63" y="312.26" width="2.19" height="0.91" fill="#9cdcfe"/><rect x="24.82" y="312.26" width="0.73" height="0.91" fill="#d4d4d4"/><rect x="26.28" y="312.26" width="3.65" height="0.91" fill="#9cdcfe"/><rect x="29.93" y="312.26" width="0.73" height="0.91" fill="#ffd700"/><rect x="0.00" y="313.73" width="0.73" height="0.91" fill="#ffd700"/><rect x="0.00" y="316.67" width="1.46" height="0.91" fill="#6a9955"/><rect x="2.19" y="316.67" width="8.76" height="0.91" fill="#6a9955"/><rect x="11.68" y="316.67" width="5.11" height="0.91" fill="#6a9955"/><rect x="17.52" y="316.67" width="0.73" height="0.91" fill="#6a9955"/><rect x="18.98" y="316.67" width="2.19" height="0.91" fill="#6a9955"/><rect x="21.90" y="316.67" width="8.76" height="0.91" fill="#6a9955"/><rect x="31.39" y="316.67" width="2.92" height="0.91" fill="#6a9955"/><rect x="35.04" y="316.67" width="2.92" height="0.91" fill="#6a9955"/><rect x="38.69" y="316.67" width="2.92" height="0.91" fill="#6a9955"/><rect x="42.34" y="316.67" width="2.92" height="0.91" fill="#6a9955"/><rect x="45.99" y="316.67" width="0.51" height="0.91" fill="#6a9955"/><rect x="0.00" y="318.14" width="1.46" height="0.91" fill="#6a9955"/><rect x="2.19" y="318.14" width="7.30" height="0.91" fill="#6a9955"/><rect x="10.22" y="318.14" width="0.73" height="0.91" fill="#6a9955"/><rect x="11.68" y="318.14" width="4.38" height="0.91" fill="#6a9955"/><rect x="16.79" y="318.14" width="1.46" height="0.91" fill="#6a9955"/><rect x="18.98" y="318.14" width="2.19" height="0.91" fill="#6a9955"/><rect x="21.90" y="318.14" width="6.57" height="0.91" fill="#6a9955"/><rect x="29.20" y="318.14" width="5.84" height="0.91" fill="#6a9955"/><rect x="35.77" y="318.14" width="2.19" height="0.91" fill="#6a9955"/><rect x="38.69" y="318.14" width="4.38" height="0.91" fill="#6a9955"/><rect x="43.80" y="318.14" width="2.70" height="0.91" fill="#6a9955"/><rect x="0.00" y="319.61" width="1.46" height="0.91" fill="#6a9955"/><rect x="2.19" y="319.61" width="2.19" height="0.91" fill="#6a9955"/><rect x="5.11" y="319.61" width="3.65" height="0.91" fill="#6a9955"/><rect x="9.49" y="319.61" width="2.19" height="0.91" fill="#6a9955"/><rect x="12.41" y="319.61" width="2.19" height="0.91" fill="#6a9955"/><rect x="15.33" y="319.61" width="1.46" height="0.91" fill="#6a9955"/><rect x="17.52" y="319.61" width="3.65" height="0.91" fill="#6a9955"/><rect x="21.90" y="319.61" width="7.30" height="0.91" fill="#6a9955"/><rect x="29.93" y="319.61" width="5.11" height="0.91" fill="#6a9955"/><rect x="35.77" y="319.61" width="6.57" height="0.91" fill="#6a9955"/><rect x="0.00" y="321.08" width="2.92" height="0.91" fill="#569cd6"/><rect x="3.65" y="321.08" width="8.76" height="0.91" fill="#dcdcaa"/><rect x="12.41" y="321.08" width="0.73" height="0.91" fill="#ffd700"/><rect x="13.14" y="321.08" width="0.73" height="0.91" fill="#9cdcfe"/><rect x="14.60" y="321.08" width="5.11" height="0.91" fill="#4ec9b0"/><rect x="19.71" y="321.08" width="0.73" height="0.91" fill="#d4d4d4"/><rect x="21.17" y="321.08" width="3.65" height="0.91" fill="#9cdcfe"/><rect x="25.55" y="321.08" width="3.65" height="0.91" fill="#4ec9b0"/><rect x="29.20" y="321.08" width="0.73" height="0.91" fill="#ffd700"/><rect x="30.66" y="321.08" width="0.73" height="0.91" fill="#d4d4d4"/><rect x="31.39" y="321.08" width="2.19" height="0.91" fill="#9cdcfe"/><rect x="33.58" y="321.08" width="0.73" height="0.91" fill="#d4d4d4"/><rect x="34.31" y="321.08" width="4.38" height="0.91" fill="#4ec9b0"/><rect x="39.42" y="321.08" width="0.73" height="0.91" fill="#ffd700"/><rect x="2.92" y="322.55" width="4.38" height="0.91" fill="#c586c0"/><rect x="8.03" y="322.55" width="2.19" height="0.91" fill="#9cdcfe"/><rect x="10.22" y="322.55" width="0.73" height="0.91" fill="#d4d4d4"/><rect x="10.95" y="322.55" width="2.19" height="0.91" fill="#dcdcaa"/><rect x="13.14" y="322.55" width="0.73" height="0.91" fill="#ffd700"/><rect x="13.87" y="322.55" width="0.73" height="0.91" fill="#d4d4d4"/><rect x="14.60" y="322.55" width="9.49" height="0.91" fill="#9cdcfe"/><rect x="24.09" y="322.55" width="0.73" height="0.91" fill="#ffd700"/><rect x="24.82" y="322.55" width="0.73" height="0.91" fill="#9cdcfe"/><rect x="25.55" y="322.55" width="0.73" height="0.91" fill="#d4d4d4"/><rect x="27.01" y="322.55" width="3.65" height="0.91" fill="#9cdcfe"/><rect x="30.66" y="322.55" width="0.73" height="0.91" fill="#d4d4d4"/><rect x="32.12" y="322.55" width="2.92" height="0.91" fill="#569cd6"/><rect x="35.04" y="322.55" width="0.73" height="0.91" fill="#ffd700"/><rect x="35.77" y="322.55" width="0.73" height="0.91" fill="#d4d4d4"/><rect x="37.23" y="322.55" width="1.46" height="0.91" fill="#ce9178"/><rect x="38.69" y="322.55" width="0.73" height="0.91" fill="#d4d4d4"/><rect x="40.15" y="322.55" width="0.73" height="0.91" fill="#b5cea8"/><rect x="40.88" y="322.55" width="0.73" height="0.91" fill="#ffd700"/><rect x="0.00" y="324.02" width="0.73" height="0.91" fill="#ffd700"/><rect x="0.00" y="326.96" width="1.46" height="0.91" fill="#6a9955"/><rect x="2.19" y="326.96" width="2.19" height="0.91" fill="#6a9955"/><rect x="5.11" y="326.96" width="3.65" height="0.91" fill="#6a9955"/><rect x="9.49" y="326.96" width="0.73" height="0.91" fill="#6a9955"/><rect x="10.95" y="326.96" width="2.19" height="0.91" fill="#6a9955"/><rect x="13.87" y="326.96" width="4.38" height="0.91" fill="#6a9955"/><rect x="18.98" y="326.96" width="2.92" height="0.91" fill="#6a9955"/><rect x="22.63" y="326.96" width="2.19" height="0.91" fill="#6a9955"/><rect x="25.55" y="326.96" width="5.11" height="0.91" fill="#6a9955"/><rect x="31.39" y="326.96" width="2.92" height="0.91" fill="#6a9955"/><rect x="35.04" y="326.96" width="2.19" height="0.91" fill="#6a9955"/><rect x="37.96" y="326.96" width="2.19" height="0.91" fill="#6a9955"/><rect x="40.88" y="326.96" width="3.65" height="0.91" fill="#6a9955"/><rect x="45.26" y="326.96" width="1.24" height="0.91" fill="#6a9955"/><rect x="0.00" y="328.43" width="1.46" height="0.91" fill="#6a9955"/><rect x="2.19" y="328.43" width="2.19" height="0.91" fill="#6a9955"/><rect x="5.11" y="328.43" width="5.84" height="0.91" fill="#6a9955"/><rect x="11.68" y="328.43" width="3.65" height="0.91" fill="#6a9955"/><rect x="16.06" y="328.43" width="5.11" height="0.91" fill="#6a9955"/><rect x="21.90" y="328.43" width="1.46" height="0.91" fill="#6a9955"/><rect x="24.09" y="328.43" width="2.19" height="0.91" fill="#6a9955"/><rect x="27.01" y="328.43" width="5.84" height="0.91" fill="#6a9955"/><rect x="33.58" y="328.43" width="7.30" height="0.91" fill="#6a9955"/><rect x="41.61" y="328.43" width="4.89" height="0.91" fill="#6a9955"/><rect x="0.00" y="329.90" width="1.46" height="0.91" fill="#6a9955"/><rect x="2.19" y="329.90" width="2.19" height="0.91" fill="#6a9955"/><rect x="5.11" y="329.90" width="3.65" height="0.91" fill="#6a9955"/><rect x="9.49" y="329.90" width="6.57" height="0.91" fill="#6a9955"/><rect x="16.79" y="329.90" width="1.46" height="0.91" fill="#6a9955"/><rect x="18.98" y="329.90" width="3.65" height="0.91" fill="#6a9955"/><rect x="0.00" y="331.37" width="1.46" height="0.91" fill="#6a9955"/><rect x="0.00" y="332.84" width="1.46" height="0.91" fill="#6a9955"/><rect x="2.19" y="332.84" width="2.19" height="0.91" fill="#6a9955"/><rect x="5.11" y="332.84" width="6.57" height="0.91" fill="#6a9955"/><rect x="12.41" y="332.84" width="6.57" height="0.91" fill="#6a9955"/><rect x="19.71" y="332.84" width="2.19" height="0.91" fill="#6a9955"/><rect x="22.63" y="332.84" width="6.57" height="0.91" fill="#6a9955"/><rect x="29.93" y="332.84" width="1.46" height="0.91" fill="#6a9955"/><rect x="32.12" y="332.84" width="5.84" height="0.91" fill="#6a9955"/><rect x="0.00" y="334.31" width="1.46" height="0.91" fill="#6a9955"/><rect x="3.65" y="334.31" width="0.73" height="0.91" fill="#6a9955"/><rect x="5.11" y="334.31" width="1.46" height="0.91" fill="#6a9955"/><rect x="7.30" y="334.31" width="1.46" height="0.91" fill="#6a9955"/><rect x="9.49" y="334.31" width="5.84" height="0.91" fill="#6a9955"/><rect x="16.06" y="334.31" width="1.46" height="0.91" fill="#6a9955"/><rect x="18.25" y="334.31" width="1.46" height="0.91" fill="#6a9955"/><rect x="20.44" y="334.31" width="3.65" height="0.91" fill="#6a9955"/><rect x="24.82" y="334.31" width="1.46" height="0.91" fill="#6a9955"/><rect x="27.01" y="334.31" width="1.46" height="0.91" fill="#6a9955"/><rect x="29.20" y="334.31" width="2.92" height="0.91" fill="#6a9955"/><rect x="32.85" y="334.31" width="1.46" height="0.91" fill="#6a9955"/><rect x="35.04" y="334.31" width="2.19" height="0.91" fill="#6a9955"/><rect x="0.00" y="335.78" width="1.46" height="0.91" fill="#6a9955"/><rect x="3.65" y="335.78" width="0.73" height="0.91" fill="#6a9955"/><rect x="5.11" y="335.78" width="1.46" height="0.91" fill="#6a9955"/><rect x="7.30" y="335.78" width="1.46" height="0.91" fill="#6a9955"/><rect x="9.49" y="335.78" width="5.84" height="0.91" fill="#6a9955"/><rect x="16.06" y="335.78" width="1.46" height="0.91" fill="#6a9955"/><rect x="18.25" y="335.78" width="0.73" height="0.91" fill="#6a9955"/><rect x="19.71" y="335.78" width="4.38" height="0.91" fill="#6a9955"/><rect x="24.82" y="335.78" width="2.19" height="0.91" fill="#6a9955"/><rect x="27.74" y="335.78" width="2.92" height="0.91" fill="#6a9955"/><rect x="31.39" y="335.78" width="1.46" height="0.91" fill="#6a9955"/><rect x="33.58" y="335.78" width="2.19" height="0.91" fill="#6a9955"/><rect x="36.50" y="335.78" width="2.19" height="0.91" fill="#6a9955"/><rect x="39.42" y="335.78" width="2.92" height="0.91" fill="#6a9955"/><rect x="43.07" y="335.78" width="3.43" height="0.91" fill="#6a9955"/><rect x="0.00" y="337.25" width="1.46" height="0.91" fill="#6a9955"/><rect x="5.11" y="337.25" width="2.19" height="0.91" fill="#6a9955"/><rect x="8.03" y="337.25" width="6.57" height="0.91" fill="#6a9955"/><rect x="15.33" y="337.25" width="5.84" height="0.91" fill="#6a9955"/><rect x="21.90" y="337.25" width="1.46" height="0.91" fill="#6a9955"/><rect x="24.09" y="337.25" width="5.11" height="0.91" fill="#6a9955"/><rect x="29.93" y="337.25" width="1.46" height="0.91" fill="#6a9955"/><rect x="32.12" y="337.25" width="2.19" height="0.91" fill="#6a9955"/><rect x="35.04" y="337.25" width="3.65" height="0.91" fill="#6a9955"/><rect x="39.42" y="337.25" width="2.19" height="0.91" fill="#6a9955"/><rect x="42.34" y="337.25" width="2.19" height="0.91" fill="#6a9955"/><rect x="45.26" y="337.25" width="1.24" height="0.91" fill="#6a9955"/><rect x="0.00" y="338.72" width="1.46" height="0.91" fill="#6a9955"/><rect x="5.11" y="338.72" width="2.92" height="0.91" fill="#6a9955"/><rect x="8.76" y="338.72" width="1.46" height="0.91" fill="#6a9955"/><rect x="10.95" y="338.72" width="3.65" height="0.91" fill="#6a9955"/><rect x="0.00" y="340.19" width="1.46" height="0.91" fill="#6a9955"/><rect x="3.65" y="340.19" width="0.73" height="0.91" fill="#6a9955"/><rect x="5.11" y="340.19" width="7.30" height="0.91" fill="#6a9955"/><rect x="13.14" y="340.19" width="2.19" height="0.91" fill="#6a9955"/><rect x="16.06" y="340.19" width="5.84" height="0.91" fill="#6a9955"/><rect x="22.63" y="340.19" width="1.46" height="0.91" fill="#6a9955"/><rect x="24.82" y="340.19" width="5.11" height="0.91" fill="#6a9955"/><rect x="30.66" y="340.19" width="1.46" height="0.91" fill="#6a9955"/><rect x="32.85" y="340.19" width="0.73" height="0.91" fill="#6a9955"/><rect x="34.31" y="340.19" width="3.65" height="0.91" fill="#6a9955"/><rect x="38.69" y="340.19" width="2.92" height="0.91" fill="#6a9955"/><rect x="42.34" y="340.19" width="2.19" height="0.91" fill="#6a9955"/><rect x="45.26" y="340.19" width="1.24" height="0.91" fill="#6a9955"/><rect x="0.00" y="341.66" width="2.92" height="0.91" fill="#569cd6"/><rect x="3.65" y="341.66" width="0.73" height="0.91" fill="#ffd700"/><rect x="4.38" y="341.66" width="0.73" height="0.91" fill="#9cdcfe"/><rect x="5.84" y="341.66" width="0.73" height="0.91" fill="#d4d4d4"/><rect x="6.57" y="341.66" width="4.38" height="0.91" fill="#4ec9b0"/><rect x="10.95" y="341.66" width="0.73" height="0.91" fill="#ffd700"/><rect x="12.41" y="341.66" width="2.19" height="0.91" fill="#dcdcaa"/><rect x="14.60" y="341.66" width="0.73" height="0.91" fill="#ffd700"/><rect x="15.33" y="341.66" width="2.19" height="0.91" fill="#9cdcfe"/><rect x="18.25" y="341.66" width="5.11" height="0.91" fill="#9cdcfe"/><rect x="23.36" y="341.66" width="0.73" height="0.91" fill="#d4d4d4"/><rect x="24.09" y="341.66" width="5.11" height="0.91" fill="#4ec9b0"/><rect x="29.20" y="341.66" width="0.73" height="0.91" fill="#d4d4d4"/><rect x="30.66" y="341.66" width="3.65" height="0.91" fill="#9cdcfe"/><rect x="35.04" y="341.66" width="3.65" height="0.91" fill="#4ec9b0"/><rect x="38.69" y="341.66" width="0.73" height="0.91" fill="#d4d4d4"/><rect x="40.15" y="341.66" width="2.19" height="0.91" fill="#9cdcfe"/><rect x="43.07" y="341.66" width="3.43" height="0.91" fill="#4ec9b0"/><rect x="2.92" y="343.13" width="0.73" height="0.91" fill="#9cdcfe"/><rect x="3.65" y="343.13" width="0.73" height="0.91" fill="#d4d4d4"/><rect x="4.38" y="343.13" width="2.19" height="0.91" fill="#dcdcaa"/><rect x="6.57" y="343.13" width="0.73" height="0.91" fill="#ffd700"/><rect x="7.30" y="343.13" width="2.19" height="0.91" fill="#9cdcfe"/><rect x="9.49" y="343.13" width="0.73" height="0.91" fill="#d4d4d4"/><rect x="10.95" y="343.13" width="3.65" height="0.91" fill="#9cdcfe"/><rect x="14.60" y="343.13" width="0.73" height="0.91" fill="#d4d4d4"/><rect x="16.06" y="343.13" width="2.19" height="0.91" fill="#9cdcfe"/><rect x="18.25" y="343.13" width="0.73" height="0.91" fill="#d4d4d4"/><rect x="19.71" y="343.13" width="2.92" height="0.91" fill="#9cdcfe"/><rect x="22.63" y="343.13" width="2.19" height="0.91" fill="#d4d4d4"/><rect x="24.82" y="343.13" width="0.73" height="0.91" fill="#ffd700"/><rect x="0.00" y="344.60" width="0.73" height="0.91" fill="#ffd700"/><rect x="0.00" y="347.54" width="1.46" height="0.91" fill="#6a9955"/><rect x="2.19" y="347.54" width="5.84" height="0.91" fill="#6a9955"/><rect x="8.76" y="347.54" width="1.46" height="0.91" fill="#6a9955"/><rect x="10.95" y="347.54" width="0.73" height="0.91" fill="#6a9955"/><rect x="12.41" y="347.54" width="2.92" height="0.91" fill="#6a9955"/><rect x="16.06" y="347.54" width="6.57" height="0.91" fill="#6a9955"/><rect x="23.36" y="347.54" width="5.11" height="0.91" fill="#6a9955"/><rect x="29.20" y="347.54" width="1.46" height="0.91" fill="#6a9955"/><rect x="31.39" y="347.54" width="8.76" height="0.91" fill="#6a9955"/><rect x="40.88" y="347.54" width="2.92" height="0.91" fill="#6a9955"/><rect x="44.53" y="347.54" width="1.97" height="0.91" fill="#6a9955"/><rect x="0.00" y="349.01" width="2.92" height="0.91" fill="#569cd6"/><rect x="3.65" y="349.01" width="0.73" height="0.91" fill="#ffd700"/><rect x="4.38" y="349.01" width="0.73" height="0.91" fill="#9cdcfe"/><rect x="5.84" y="349.01" width="0.73" height="0.91" fill="#d4d4d4"/><rect x="6.57" y="349.01" width="4.38" height="0.91" fill="#4ec9b0"/><rect x="10.95" y="349.01" width="0.73" height="0.91" fill="#ffd700"/><rect x="12.41" y="349.01" width="5.84" height="0.91" fill="#dcdcaa"/><rect x="18.25" y="349.01" width="0.73" height="0.91" fill="#ffd700"/><rect x="18.98" y="349.01" width="2.19" height="0.91" fill="#9cdcfe"/><rect x="21.90" y="349.01" width="5.11" height="0.91" fill="#9cdcfe"/><rect x="27.01" y="349.01" width="0.73" height="0.91" fill="#d4d4d4"/><rect x="27.74" y="349.01" width="5.11" height="0.91" fill="#4ec9b0"/><rect x="32.85" y="349.01" width="0.73" height="0.91" fill="#d4d4d4"/><rect x="34.31" y="349.01" width="3.65" height="0.91" fill="#9cdcfe"/><rect x="38.69" y="349.01" width="3.65" height="0.91" fill="#4ec9b0"/><rect x="42.34" y="349.01" width="0.73" height="0.91" fill="#d4d4d4"/><rect x="43.80" y="349.01" width="2.19" height="0.91" fill="#9cdcfe"/><rect x="2.92" y="350.48" width="0.73" height="0.91" fill="#9cdcfe"/><rect x="3.65" y="350.48" width="0.73" height="0.91" fill="#d4d4d4"/><rect x="4.38" y="350.48" width="5.84" height="0.91" fill="#dcdcaa"/><rect x="10.22" y="350.48" width="0.73" height="0.91" fill="#ffd700"/><rect x="10.95" y="350.48" width="2.19" height="0.91" fill="#9cdcfe"/><rect x="13.14" y="350.48" width="0.73" height="0.91" fill="#d4d4d4"/><rect x="14.60" y="350.48" width="3.65" height="0.91" fill="#9cdcfe"/><rect x="18.25" y="350.48" width="0.73" height="0.91" fill="#d4d4d4"/><rect x="19.71" y="350.48" width="2.19" height="0.91" fill="#9cdcfe"/><rect x="21.90" y="350.48" width="0.73" height="0.91" fill="#d4d4d4"/><rect x="23.36" y="350.48" width="3.65" height="0.91" fill="#9cdcfe"/><rect x="27.01" y="350.48" width="2.19" height="0.91" fill="#d4d4d4"/><rect x="29.20" y="350.48" width="0.73" height="0.91" fill="#ffd700"/><rect x="0.00" y="351.95" width="0.73" height="0.91" fill="#ffd700"/><rect x="0.00" y="354.89" width="1.46" height="0.91" fill="#6a9955"/><rect x="2.19" y="354.89" width="3.65" height="0.91" fill="#6a9955"/><rect x="6.57" y="354.89" width="2.92" height="0.91" fill="#6a9955"/><rect x="10.22" y="354.89" width="1.46" height="0.91" fill="#6a9955"/><rect x="12.41" y="354.89" width="9.49" height="0.91" fill="#6a9955"/><rect x="0.00" y="356.36" width="2.92" height="0.91" fill="#569cd6"/><rect x="3.65" y="356.36" width="0.73" height="0.91" fill="#ffd700"/><rect x="4.38" y="356.36" width="0.73" height="0.91" fill="#9cdcfe"/><rect x="5.84" y="356.36" width="0.73" height="0.91" fill="#d4d4d4"/><rect x="6.57" y="356.36" width="4.38" height="0.91" fill="#4ec9b0"/><rect x="10.95" y="356.36" width="0.73" height="0.91" fill="#ffd700"/><rect x="12.41" y="356.36" width="3.65" height="0.91" fill="#dcdcaa"/><rect x="16.06" y="356.36" width="0.73" height="0.91" fill="#ffd700"/><rect x="16.79" y="356.36" width="2.19" height="0.91" fill="#9cdcfe"/><rect x="19.71" y="356.36" width="4.38" height="0.91" fill="#4ec9b0"/><rect x="24.09" y="356.36" width="0.73" height="0.91" fill="#d4d4d4"/><rect x="25.55" y="356.36" width="2.92" height="0.91" fill="#9cdcfe"/><rect x="29.20" y="356.36" width="2.19" height="0.91" fill="#d4d4d4"/><rect x="31.39" y="356.36" width="2.19" height="0.91" fill="#4ec9b0"/><rect x="33.58" y="356.36" width="0.73" height="0.91" fill="#ffd700"/><rect x="35.04" y="356.36" width="0.73" height="0.91" fill="#ffd700"/><rect x="2.92" y="357.83" width="0.73" height="0.91" fill="#9cdcfe"/><rect x="3.65" y="357.83" width="0.73" height="0.91" fill="#d4d4d4"/><rect x="4.38" y="357.83" width="2.19" height="0.91" fill="#dcdcaa"/><rect x="6.57" y="357.83" width="0.73" height="0.91" fill="#ffd700"/><rect x="7.30" y="357.83" width="5.11" height="0.91" fill="#9cdcfe"/><rect x="12.41" y="357.83" width="0.73" height="0.91" fill="#d4d4d4"/><rect x="13.14" y="357.83" width="7.30" height="0.91" fill="#dcdcaa"/><rect x="20.44" y="357.83" width="1.46" height="0.91" fill="#ffd700"/><rect x="21.90" y="357.83" width="0.73" height="0.91" fill="#d4d4d4"/><rect x="23.36" y="357.83" width="7.30" height="0.91" fill="#4ec9b0"/><rect x="30.66" y="357.83" width="0.73" height="0.91" fill="#d4d4d4"/><rect x="32.12" y="357.83" width="2.19" height="0.91" fill="#9cdcfe"/><rect x="34.31" y="357.83" width="0.73" height="0.91" fill="#d4d4d4"/><rect x="35.77" y="357.83" width="2.92" height="0.91" fill="#9cdcfe"/><rect x="38.69" y="357.83" width="2.19" height="0.91" fill="#d4d4d4"/><rect x="40.88" y="357.83" width="0.73" height="0.91" fill="#ffd700"/><rect x="0.00" y="359.30" width="0.73" height="0.91" fill="#ffd700"/><rect x="0.00" y="362.24" width="1.46" height="0.91" fill="#6a9955"/><rect x="2.19" y="362.24" width="8.76" height="0.91" fill="#6a9955"/><rect x="11.68" y="362.24" width="2.92" height="0.91" fill="#6a9955"/><rect x="15.33" y="362.24" width="1.46" height="0.91" fill="#6a9955"/><rect x="17.52" y="362.24" width="8.76" height="0.91" fill="#6a9955"/><rect x="27.01" y="362.24" width="2.92" height="0.91" fill="#6a9955"/><rect x="30.66" y="362.24" width="2.19" height="0.91" fill="#6a9955"/><rect x="33.58" y="362.24" width="3.65" height="0.91" fill="#6a9955"/><rect x="37.96" y="362.24" width="5.84" height="0.91" fill="#6a9955"/><rect x="0.00" y="363.71" width="2.92" height="0.91" fill="#569cd6"/><rect x="3.65" y="363.71" width="0.73" height="0.91" fill="#ffd700"/><rect x="4.38" y="363.71" width="0.73" height="0.91" fill="#9cdcfe"/><rect x="5.84" y="363.71" width="0.73" height="0.91" fill="#d4d4d4"/><rect x="6.57" y="363.71" width="4.38" height="0.91" fill="#4ec9b0"/><rect x="10.95" y="363.71" width="0.73" height="0.91" fill="#ffd700"/><rect x="12.41" y="363.71" width="8.76" height="0.91" fill="#dcdcaa"/><rect x="21.17" y="363.71" width="0.73" height="0.91" fill="#ffd700"/><rect x="21.90" y="363.71" width="2.19" height="0.91" fill="#9cdcfe"/><rect x="24.82" y="363.71" width="5.11" height="0.91" fill="#9cdcfe"/><rect x="29.93" y="363.71" width="0.73" height="0.91" fill="#d4d4d4"/><rect x="30.66" y="363.71" width="5.11" height="0.91" fill="#4ec9b0"/><rect x="35.77" y="363.71" width="0.73" height="0.91" fill="#d4d4d4"/><rect x="37.23" y="363.71" width="2.19" height="0.91" fill="#9cdcfe"/><rect x="40.15" y="363.71" width="4.38" height="0.91" fill="#4ec9b0"/><rect x="44.53" y="363.71" width="0.73" height="0.91" fill="#d4d4d4"/><rect x="45.99" y="363.71" width="0.51" height="0.91" fill="#9cdcfe"/><rect x="2.92" y="365.18" width="0.73" height="0.91" fill="#9cdcfe"/><rect x="3.65" y="365.18" width="0.73" height="0.91" fill="#d4d4d4"/><rect x="4.38" y="365.18" width="2.19" height="0.91" fill="#dcdcaa"/><rect x="6.57" y="365.18" width="0.73" height="0.91" fill="#ffd700"/><rect x="7.30" y="365.18" width="2.19" height="0.91" fill="#9cdcfe"/><rect x="9.49" y="365.18" width="0.73" height="0.91" fill="#d4d4d4"/><rect x="10.95" y="365.18" width="7.30" height="0.91" fill="#4ec9b0"/><rect x="18.25" y="365.18" width="0.73" height="0.91" fill="#d4d4d4"/><rect x="19.71" y="365.18" width="2.19" height="0.91" fill="#9cdcfe"/><rect x="21.90" y="365.18" width="0.73" height="0.91" fill="#d4d4d4"/><rect x="23.36" y="365.18" width="2.92" height="0.91" fill="#9cdcfe"/><rect x="26.28" y="365.18" width="2.19" height="0.91" fill="#d4d4d4"/><rect x="28.47" y="365.18" width="0.73" height="0.91" fill="#ffd700"/><rect x="0.00" y="366.65" width="0.73" height="0.91" fill="#ffd700"/><rect x="0.00" y="369.59" width="1.46" height="0.91" fill="#6a9955"/><rect x="2.19" y="369.59" width="2.92" height="0.91" fill="#6a9955"/><rect x="5.84" y="369.59" width="2.92" height="0.91" fill="#6a9955"/><rect x="9.49" y="369.59" width="1.46" height="0.91" fill="#6a9955"/><rect x="11.68" y="369.59" width="8.76" height="0.91" fill="#6a9955"/><rect x="0.00" y="371.06" width="2.92" height="0.91" fill="#569cd6"/><rect x="3.65" y="371.06" width="0.73" height="0.91" fill="#ffd700"/><rect x="4.38" y="371.06" width="0.73" height="0.91" fill="#9cdcfe"/><rect x="5.84" y="371.06" width="0.73" height="0.91" fill="#d4d4d4"/><rect x="6.57" y="371.06" width="4.38" height="0.91" fill="#4ec9b0"/><rect x="10.95" y="371.06" width="0.73" height="0.91" fill="#ffd700"/><rect x="12.41" y="371.06" width="2.92" height="0.91" fill="#dcdcaa"/><rect x="15.33" y="371.06" width="0.73" height="0.91" fill="#ffd700"/><rect x="16.06" y="371.06" width="2.19" height="0.91" fill="#9cdcfe"/><rect x="18.98" y="371.06" width="4.38" height="0.91" fill="#4ec9b0"/><rect x="23.36" y="371.06" width="0.73" height="0.91" fill="#d4d4d4"/><rect x="24.82" y="371.06" width="2.92" height="0.91" fill="#9cdcfe"/><rect x="28.47" y="371.06" width="2.19" height="0.91" fill="#d4d4d4"/><rect x="30.66" y="371.06" width="2.19" height="0.91" fill="#4ec9b0"/><rect x="32.85" y="371.06" width="0.73" height="0.91" fill="#ffd700"/><rect x="34.31" y="371.06" width="0.73" height="0.91" fill="#ffd700"/><rect x="2.92" y="372.53" width="0.73" height="0.91" fill="#9cdcfe"/><rect x="3.65" y="372.53" width="0.73" height="0.91" fill="#d4d4d4"/><rect x="4.38" y="372.53" width="2.19" height="0.91" fill="#dcdcaa"/><rect x="6.57" y="372.53" width="0.73" height="0.91" fill="#ffd700"/><rect x="7.30" y="372.53" width="5.11" height="0.91" fill="#9cdcfe"/><rect x="12.41" y="372.53" width="0.73" height="0.91" fill="#d4d4d4"/><rect x="13.14" y="372.53" width="7.30" height="0.91" fill="#dcdcaa"/><rect x="20.44" y="372.53" width="1.46" height="0.91" fill="#ffd700"/><rect x="21.90" y="372.53" width="0.73" height="0.91" fill="#d4d4d4"/><rect x="23.36" y="372.53" width="6.57" height="0.91" fill="#4ec9b0"/><rect x="29.93" y="372.53" width="0.73" height="0.91" fill="#d4d4d4"/><rect x="31.39" y="372.53" width="2.19" height="0.91" fill="#9cdcfe"/><rect x="33.58" y="372.53" width="0.73" height="0.91" fill="#d4d4d4"/><rect x="35.04" y="372.53" width="2.92" height="0.91" fill="#9cdcfe"/><rect x="37.96" y="372.53" width="2.19" height="0.91" fill="#d4d4d4"/><rect x="40.15" y="372.53" width="0.73" height="0.91" fill="#ffd700"/><rect x="0.00" y="374.00" width="0.73" height="0.91" fill="#ffd700"/><rect x="0.00" y="376.94" width="1.46" height="0.91" fill="#6a9955"/><rect x="2.19" y="376.94" width="8.03" height="0.91" fill="#6a9955"/><rect x="10.95" y="376.94" width="2.92" height="0.91" fill="#6a9955"/><rect x="14.60" y="376.94" width="1.46" height="0.91" fill="#6a9955"/><rect x="16.79" y="376.94" width="8.03" height="0.91" fill="#6a9955"/><rect x="25.55" y="376.94" width="2.92" height="0.91" fill="#6a9955"/><rect x="29.20" y="376.94" width="2.19" height="0.91" fill="#6a9955"/><rect x="32.12" y="376.94" width="3.65" height="0.91" fill="#6a9955"/><rect x="36.50" y="376.94" width="5.84" height="0.91" fill="#6a9955"/><rect x="0.00" y="378.41" width="2.92" height="0.91" fill="#569cd6"/><rect x="3.65" y="378.41" width="0.73" height="0.91" fill="#ffd700"/><rect x="4.38" y="378.41" width="0.73" height="0.91" fill="#9cdcfe"/><rect x="5.84" y="378.41" width="0.73" height="0.91" fill="#d4d4d4"/><rect x="6.57" y="378.41" width="4.38" height="0.91" fill="#4ec9b0"/><rect x="10.95" y="378.41" width="0.73" height="0.91" fill="#ffd700"/><rect x="12.41" y="378.41" width="8.03" height="0.91" fill="#dcdcaa"/><rect x="20.44" y="378.41" width="0.73" height="0.91" fill="#ffd700"/><rect x="21.17" y="378.41" width="2.19" height="0.91" fill="#9cdcfe"/><rect x="24.09" y="378.41" width="5.11" height="0.91" fill="#9cdcfe"/><rect x="29.20" y="378.41" width="0.73" height="0.91" fill="#d4d4d4"/><rect x="29.93" y="378.41" width="5.11" height="0.91" fill="#4ec9b0"/><rect x="35.04" y="378.41" width="0.73" height="0.91" fill="#d4d4d4"/><rect x="36.50" y="378.41" width="2.19" height="0.91" fill="#9cdcfe"/><rect x="39.42" y="378.41" width="4.38" height="0.91" fill="#4ec9b0"/><rect x="43.80" y="378.41" width="0.73" height="0.91" fill="#d4d4d4"/><rect x="45.26" y="378.41" width="1.24" height="0.91" fill="#9cdcfe"/><rect x="2.92" y="379.88" width="0.73" height="0.91" fill="#9cdcfe"/><rect x="3.65" y="379.88" width="0.73" height="0.91" fill="#d4d4d4"/><rect x="4.38" y="379.88" width="2.19" height="0.91" fill="#dcdcaa"/><rect x="6.57" y="379.88" width="0.73" height="0.91" fill="#ffd700"/><rect x="7.30" y="379.88" width="2.19" height="0.91" fill="#9cdcfe"/><rect x="9.49" y="379.88" width="0.73" height="0.91" fill="#d4d4d4"/><rect x="10.95" y="379.88" width="6.57" height="0.91" fill="#4ec9b0"/><rect x="17.52" y="379.88" width="0.73" height="0.91" fill="#d4d4d4"/><rect x="18.98" y="379.88" width="2.19" height="0.91" fill="#9cdcfe"/><rect x="21.17" y="379.88" width="0.73" height="0.91" fill="#d4d4d4"/><rect x="22.63" y="379.88" width="2.92" height="0.91" fill="#9cdcfe"/><rect x="25.55" y="379.88" width="2.19" height="0.91" fill="#d4d4d4"/><rect x="27.74" y="379.88" width="0.73" height="0.91" fill="#ffd700"/><rect x="0.00" y="381.35" width="0.73" height="0.91" fill="#ffd700"/><rect x="0.00" y="384.29" width="1.46" height="0.91" fill="#6a9955"/><rect x="2.19" y="384.29" width="2.92" height="0.91" fill="#6a9955"/><rect x="5.84" y="384.29" width="2.92" height="0.91" fill="#6a9955"/><rect x="9.49" y="384.29" width="1.46" height="0.91" fill="#6a9955"/><rect x="11.68" y="384.29" width="8.76" height="0.91" fill="#6a9955"/><rect x="0.00" y="385.76" width="2.92" height="0.91" fill="#569cd6"/><rect x="3.65" y="385.76" width="0.73" height="0.91" fill="#ffd700"/><rect x="4.38" y="385.76" width="0.73" height="0.91" fill="#9cdcfe"/><rect x="5.84" y="385.76" width="0.73" height="0.91" fill="#d4d4d4"/><rect x="6.57" y="385.76" width="4.38" height="0.91" fill="#4ec9b0"/><rect x="10.95" y="385.76" width="0.73" height="0.91" fill="#ffd700"/><rect x="12.41" y="385.76" width="2.92" height="0.91" fill="#dcdcaa"/><rect x="15.33" y="385.76" width="0.73" height="0.91" fill="#ffd700"/><rect x="16.06" y="385.76" width="2.19" height="0.91" fill="#9cdcfe"/><rect x="18.98" y="385.76" width="4.38" height="0.91" fill="#4ec9b0"/><rect x="23.36" y="385.76" width="0.73" height="0.91" fill="#d4d4d4"/><rect x="24.82" y="385.76" width="2.92" height="0.91" fill="#9cdcfe"/><rect x="28.47" y="385.76" width="2.19" height="0.91" fill="#d4d4d4"/><rect x="30.66" y="385.76" width="2.19" height="0.91" fill="#4ec9b0"/><rect x="32.85" y="385.76" width="0.73" height="0.91" fill="#ffd700"/><rect x="34.31" y="385.76" width="0.73" height="0.91" fill="#ffd700"/><rect x="2.92" y="387.23" width="0.73" height="0.91" fill="#9cdcfe"/><rect x="3.65" y="387.23" width="0.73" height="0.91" fill="#d4d4d4"/><rect x="4.38" y="387.23" width="2.19" height="0.91" fill="#dcdcaa"/><rect x="6.57" y="387.23" width="0.73" height="0.91" fill="#ffd700"/><rect x="7.30" y="387.23" width="5.11" height="0.91" fill="#9cdcfe"/><rect x="12.41" y="387.23" width="0.73" height="0.91" fill="#d4d4d4"/><rect x="13.14" y="387.23" width="7.30" height="0.91" fill="#dcdcaa"/><rect x="20.44" y="387.23" width="1.46" height="0.91" fill="#ffd700"/><rect x="21.90" y="387.23" width="0.73" height="0.91" fill="#d4d4d4"/><rect x="23.36" y="387.23" width="6.57" height="0.91" fill="#4ec9b0"/><rect x="29.93" y="387.23" width="0.73" height="0.91" fill="#d4d4d4"/><rect x="31.39" y="387.23" width="2.19" height="0.91" fill="#9cdcfe"/><rect x="33.58" y="387.23" width="0.73" height="0.91" fill="#d4d4d4"/><rect x="35.04" y="387.23" width="2.92" height="0.91" fill="#9cdcfe"/><rect x="37.96" y="387.23" width="2.19" height="0.91" fill="#d4d4d4"/><rect x="40.15" y="387.23" width="0.73" height="0.91" fill="#ffd700"/><rect x="0.00" y="388.70" width="0.73" height="0.91" fill="#ffd700"/><rect x="0.00" y="391.64" width="1.46" height="0.91" fill="#6a9955"/><rect x="2.19" y="391.64" width="8.03" height="0.91" fill="#6a9955"/><rect x="10.95" y="391.64" width="2.92" height="0.91" fill="#6a9955"/><rect x="14.60" y="391.64" width="1.46" height="0.91" fill="#6a9955"/><rect x="16.79" y="391.64" width="8.03" height="0.91" fill="#6a9955"/><rect x="25.55" y="391.64" width="2.92" height="0.91" fill="#6a9955"/><rect x="29.20" y="391.64" width="2.19" height="0.91" fill="#6a9955"/><rect x="32.12" y="391.64" width="3.65" height="0.91" fill="#6a9955"/><rect x="36.50" y="391.64" width="5.84" height="0.91" fill="#6a9955"/><rect x="0.00" y="393.11" width="2.92" height="0.91" fill="#569cd6"/><rect x="3.65" y="393.11" width="0.73" height="0.91" fill="#ffd700"/><rect x="4.38" y="393.11" width="0.73" height="0.91" fill="#9cdcfe"/><rect x="5.84" y="393.11" width="0.73" height="0.91" fill="#d4d4d4"/><rect x="6.57" y="393.11" width="4.38" height="0.91" fill="#4ec9b0"/><rect x="10.95" y="393.11" width="0.73" height="0.91" fill="#ffd700"/><rect x="12.41" y="393.11" width="8.03" height="0.91" fill="#dcdcaa"/><rect x="20.44" y="393.11" width="0.73" height="0.91" fill="#ffd700"/><rect x="21.17" y="393.11" width="2.19" height="0.91" fill="#9cdcfe"/><rect x="24.09" y="393.11" width="5.11" height="0.91" fill="#9cdcfe"/><rect x="29.20" y="393.11" width="0.73" height="0.91" fill="#d4d4d4"/><rect x="29.93" y="393.11" width="5.11" height="0.91" fill="#4ec9b0"/><rect x="35.04" y="393.11" width="0.73" height="0.91" fill="#d4d4d4"/><rect x="36.50" y="393.11" width="2.19" height="0.91" fill="#9cdcfe"/><rect x="39.42" y="393.11" width="4.38" height="0.91" fill="#4ec9b0"/><rect x="43.80" y="393.11" width="0.73" height="0.91" fill="#d4d4d4"/><rect x="45.26" y="393.11" width="1.24" height="0.91" fill="#9cdcfe"/><rect x="2.92" y="394.58" width="0.73" height="0.91" fill="#9cdcfe"/><rect x="3.65" y="394.58" width="0.73" height="0.91" fill="#d4d4d4"/><rect x="4.38" y="394.58" width="2.19" height="0.91" fill="#dcdcaa"/><rect x="6.57" y="394.58" width="0.73" height="0.91" fill="#ffd700"/><rect x="7.30" y="394.58" width="2.19" height="0.91" fill="#9cdcfe"/><rect x="9.49" y="394.58" width="0.73" height="0.91" fill="#d4d4d4"/><rect x="10.95" y="394.58" width="6.57" height="0.91" fill="#4ec9b0"/><rect x="17.52" y="394.58" width="0.73" height="0.91" fill="#d4d4d4"/><rect x="18.98" y="394.58" width="2.19" height="0.91" fill="#9cdcfe"/><rect x="21.17" y="394.58" width="0.73" height="0.91" fill="#d4d4d4"/><rect x="22.63" y="394.58" width="2.92" height="0.91" fill="#9cdcfe"/><rect x="25.55" y="394.58" width="2.19" height="0.91" fill="#d4d4d4"/><rect x="27.74" y="394.58" width="0.73" height="0.91" fill="#ffd700"/><rect x="0.00" y="396.05" width="0.73" height="0.91" fill="#ffd700"/><rect x="0.00" y="398.99" width="1.46" height="0.91" fill="#6a9955"/><rect x="2.19" y="398.99" width="3.65" height="0.91" fill="#6a9955"/><rect x="6.57" y="398.99" width="2.92" height="0.91" fill="#6a9955"/><rect x="10.22" y="398.99" width="1.46" height="0.91" fill="#6a9955"/><rect x="12.41" y="398.99" width="9.49" height="0.91" fill="#6a9955"/></g></svg><div style="position:absolute;left:810px;top:66px;width:10px;height:334px;background:#1f1f1f;"></div><div style="position:absolute;left:809.8px;top:65px;width:1px;height:335px;background:#191919;"></div><div style="position:absolute;left:810px;top:146px;width:10px;height:2px;background:#9a9a9a;"></div><div style="position:absolute;left:820px;top:23px;width:1px;height:377px;background:#2b2b2b;"></div><div style="position:absolute;left:821px;top:23px;width:459px;height:377px;background:#181818;"></div><svg style="position:absolute;left:828px;top:27px;" width="18" height="18" viewBox="0 0 18 18"><path d="M7.9 3.3 Q6 7.5 4 12.3 L7.6 9.6 Z" fill="#dadada"/><path d="M8.6 3.3 Q10.5 7.5 12.5 12.3 L8.9 9.6 Z" fill="#dadada"/><path d="M8.25 10.4 L9.9 12.8 L8.25 15.1 L6.6 12.8 Z" fill="#dadada"/></svg><div style="position:absolute;left:828.4px;top:46.9px;width:16.6px;height:1.7px;background:#0a72c4;"></div><svg style="position:absolute;left:1155px;top:25px;" width="122" height="22" viewBox="0 0 122 22">
<g stroke="#cccccc" stroke-width="1" fill="none">
<path d="M11.6 6 V16 M6.6 11 H16.6"/>
<path d="M26.5 11 A5.2 5.2 0 1 0 28.2 7.2 M26 6 V8.6 H28.6 M31.2 8.5 V11.3 L33 13"/>
<path d="M46 8 V6 H48 M54 6 H56 V8 M56 14 V16 H54 M48 16 H46 V14"/>
<rect x="47.8" y="8.6" width="6.4" height="4.8" stroke-width="1.5"/>
<circle cx="70" cy="11" r="1.4" fill="#aaaaaa" stroke="none"/><circle cx="70" cy="11" r="3.6" stroke-width="0.6" stroke="#666"/><circle cx="74.70" cy="11.00" r="1.05" stroke-width="0.85"/><circle cx="73.32" cy="14.32" r="1.05" stroke-width="0.85"/><circle cx="70.00" cy="15.70" r="1.05" stroke-width="0.85"/><circle cx="66.68" cy="14.32" r="1.05" stroke-width="0.85"/><circle cx="65.30" cy="11.00" r="1.05" stroke-width="0.85"/><circle cx="66.68" cy="7.68" r="1.05" stroke-width="0.85"/><circle cx="70.00" cy="6.30" r="1.05" stroke-width="0.85"/><circle cx="73.32" cy="7.68" r="1.05" stroke-width="0.85"/>
<circle cx="89.4" cy="11" r="5.4"/>
<path d="M89.4 9.5 V14"/>
<path d="M105 7.5 L112 14.5 M112 7.5 L105 14.5"/>
</g>
<circle cx="89.4" cy="7.8" r="0.7" fill="#cccccc"/>
</svg><div style="position:absolute;left:827.6px;top:58.3px;width:445.6px;height:39.3px;background:#313131;border-radius:4px;"></div><div style="position:absolute;left:833.7px;top:65.50px;height:14.84px;line-height:14.84px;font-size:10.6px;font-family:'Liberation Sans', sans-serif;font-weight:400;color:#cccccc;white-space:pre;letter-spacing:0.138px;">@gitlab:create_mr /Users/russellluo/Projects/work/opencsg/projects/crmaestro</div><div style="position:absolute;left:829px;top:113.60px;height:14.84px;line-height:14.84px;font-size:10.6px;font-family:'Liberation Sans', sans-serif;font-weight:700;color:#cccccc;white-space:pre;letter-spacing:-0.023px;">Pushing changes to remote:</div><div style="position:absolute;left:829px;top:141.15px;height:14.84px;line-height:14.84px;font-size:10.6px;font-family:'Liberation Sans', sans-serif;font-weight:400;color:#cccccc;white-space:pre;letter-spacing:0.17px;">[origin] remote: remote: To create a merge request for test-create-mr, visit:</div><div style="position:absolute;left:829px;top:157.10px;height:14.84px;line-height:14.84px;font-size:10.6px;font-family:'Liberation Sans', sans-serif;font-weight:400;color:#cccccc;white-space:pre;letter-spacing:0.163px;">remote: https://git-devops.opencsg.com/product/starship/crmaestro/-/merge_requests/new?</div><div style="position:absolute;left:829px;top:172.70px;height:14.84px;line-height:14.84px;font-size:10.6px;font-family:'Liberation Sans', sans-serif;font-weight:400;color:#cccccc;white-space:pre;letter-spacing:0.163px;">merge_request%5Bsource_branch%5D=test-create-mr</div><div style="position:absolute;left:829px;top:188.20px;height:14.84px;line-height:14.84px;font-size:10.6px;font-family:'Liberation Sans', sans-serif;font-weight:400;color:#cccccc;white-space:pre;letter-spacing:0.183px;">remote: To git-devops.opencsg.com:product/starship/crmaestro.git</div><svg style="position:absolute;left:848px;top:218px;" width="6" height="6" viewBox="0 0 6 6"><circle cx="2.9" cy="3" r="1.7" fill="#cccccc"/></svg><div style="position:absolute;left:858.5px;top:214.40px;height:14.84px;line-height:14.84px;font-size:10.6px;font-family:'Liberation Sans', sans-serif;font-weight:400;color:#cccccc;white-space:pre;letter-spacing:0.277px;">[new branch] test-create-mr -&gt; test-create-mr</div><div style="position:absolute;left:829px;top:242.10px;height:14.84px;line-height:14.84px;font-size:10.6px;font-family:'Liberation Sans', sans-serif;font-weight:700;color:#cccccc;white-space:pre;letter-spacing:0.059px;">Generate Merge Request Title:</div><div style="position:absolute;left:829px;top:269.60px;height:14.84px;line-height:14.84px;font-size:10.6px;font-family:'Liberation Sans', sans-serif;font-weight:400;color:#cccccc;white-space:pre;letter-spacing:0.183px;">Test</div><div style="position:absolute;left:829px;top:296.80px;height:14.84px;line-height:14.84px;font-size:10.6px;font-family:'Liberation Sans', sans-serif;font-weight:700;color:#cccccc;white-space:pre;letter-spacing:0.061px;">Execute create merge request:</div><div style="position:absolute;left:829px;top:324.90px;height:14.84px;line-height:14.84px;font-size:10.6px;font-family:'Liberation Sans', sans-serif;font-weight:400;color:#cccccc;white-space:pre;letter-spacing:0.085px;">The Merge Request titled "Test" has been successfully created in GitLab. You can view it</div><div style="position:absolute;left:829px;top:340.20px;height:14.84px;line-height:14.84px;font-size:10.6px;font-family:'Liberation Sans', sans-serif;font-weight:400;color:#cccccc;white-space:pre;letter-spacing:0.182px;"><span style="color:#4daafc">here</span>.</div><div style="position:absolute;left:0px;top:94.3px;width:33.2px;height:36px;box-sizing:border-box;border:3.2px solid #ee4c48;border-radius:5px;"></div><svg style="position:absolute;left:870px;top:330px;" width="80" height="70" viewBox="0 0 80 70"><path d="M14 14 L36.8 18.2 L31.6 23.4 L70.9 54.3 Q72 56.3 69.3 57.1 L28.3 28.5 L23.8 34.3 Z" fill="#f04a45" stroke="#f04a45" stroke-width="0.8" stroke-linejoin="round"/></svg>
</div></body></html>
